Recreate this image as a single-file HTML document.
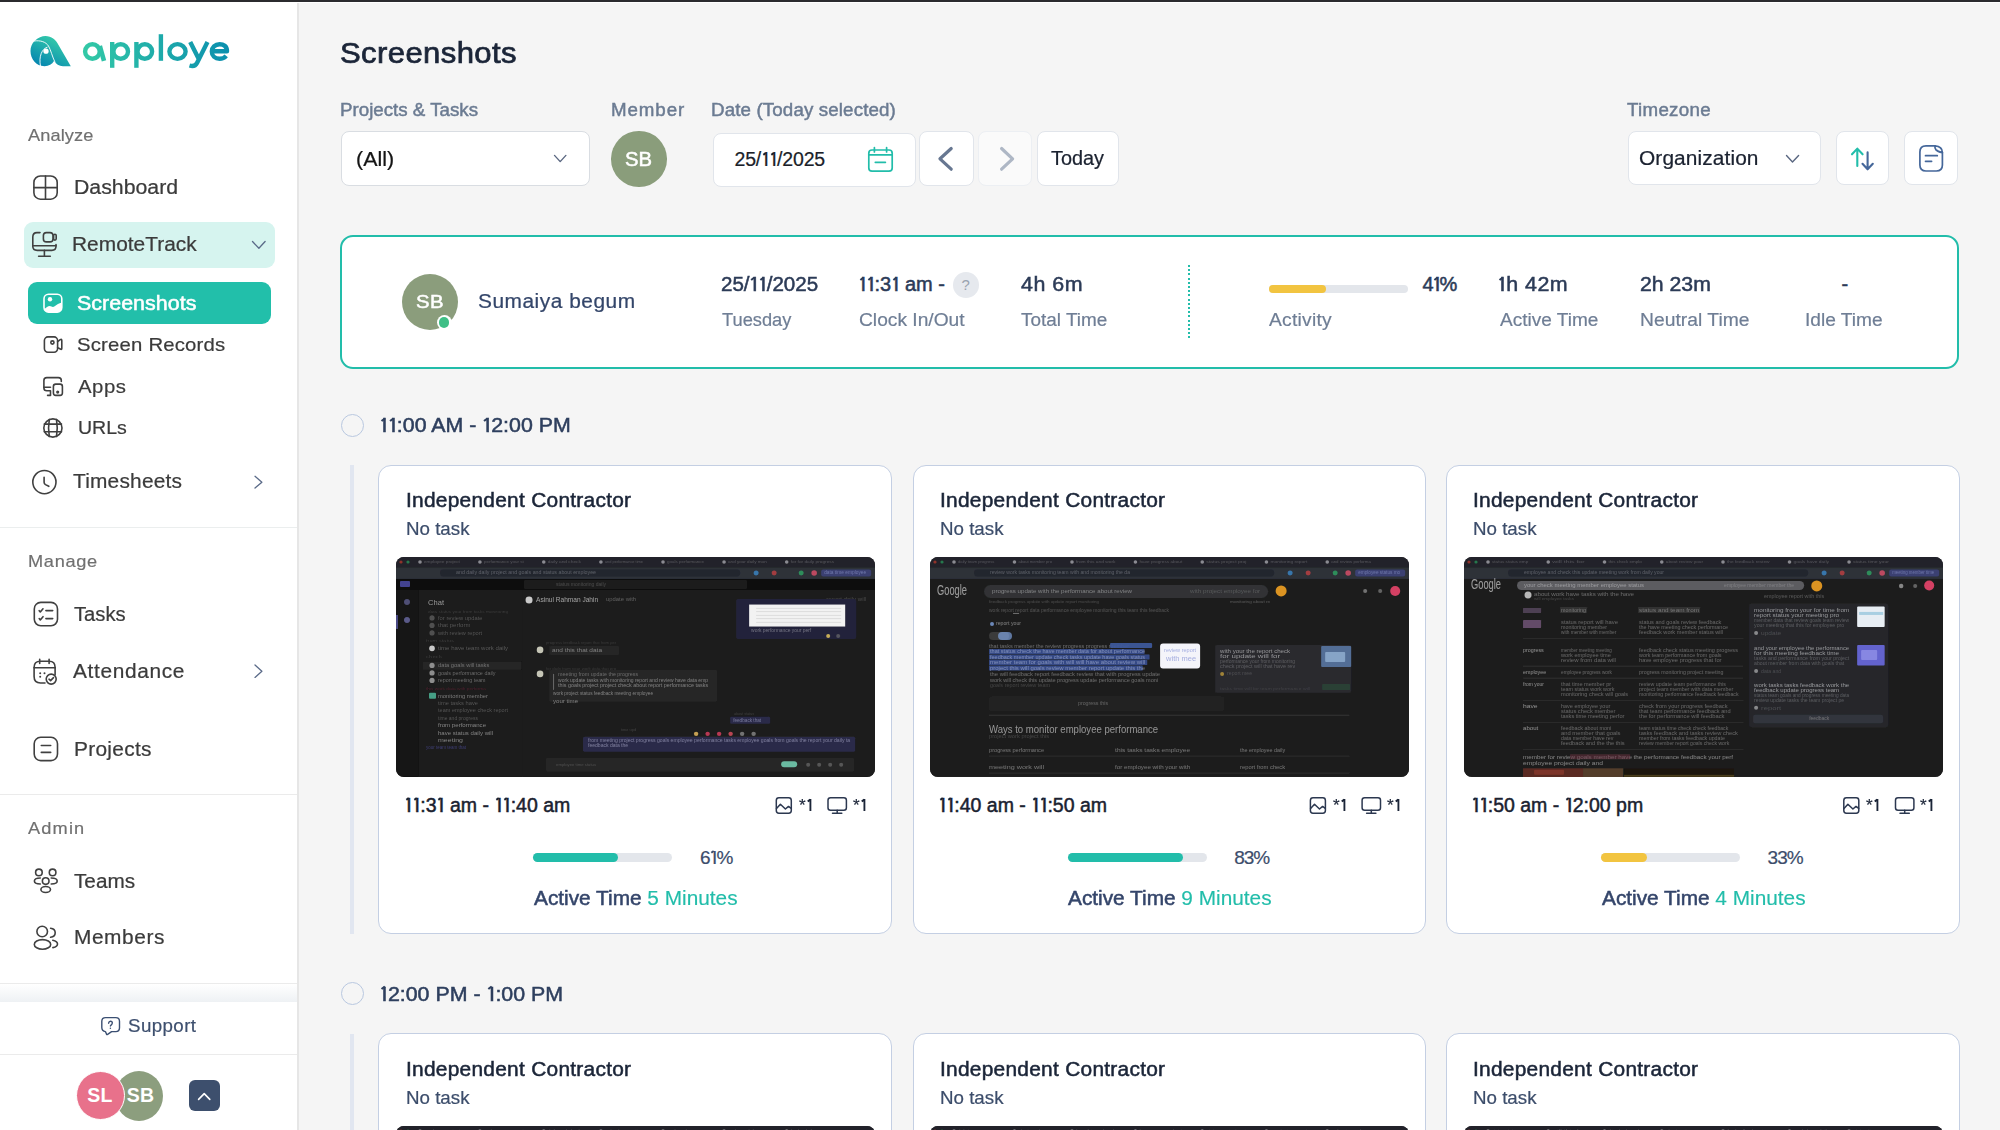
<!DOCTYPE html>
<html><head><meta charset="utf-8"><title>Screenshots</title><style>
*{margin:0;padding:0;box-sizing:border-box}
html,body{width:2000px;height:1130px;overflow:hidden;background:#f5f5f5;font-family:"Liberation Sans",sans-serif}
.a{position:absolute}
.t{position:absolute;white-space:nowrap;line-height:1}
.n1{position:relative;padding-left:0.12em;letter-spacing:calc(var(--ls,0px) + 0.02em)}
.n1::before{content:'';position:absolute;left:0.03em;top:0.175em;width:0.175em;height:0.105em;background:currentColor;transform:rotate(-38deg);transform-origin:100% 0}
.box{position:absolute;background:#fff;border:1px solid #dde2e8;border-radius:8px}
.av{position:absolute;border-radius:50%;color:#fff;font-weight:700;display:flex;align-items:center;justify-content:center;font-family:"Liberation Sans",sans-serif}
</style></head>
<body>
<div class="a" style="left:0;top:0;width:297px;height:1130px;background:#fff"></div>
<div class="a" style="left:297px;top:0;width:2px;height:1130px;background:#e6e6e6"></div>
<div class="a" style="left:0;top:526.5px;width:297px;height:1px;background:#ebeeee"></div>
<div class="a" style="left:0;top:793.8px;width:297px;height:1px;background:#ebebeb"></div>
<div class="a" style="left:0;top:983px;width:297px;height:1px;background:#ebebeb"></div>
<div class="a" style="left:0;top:984px;width:297px;height:18px;background:linear-gradient(#fff,#eef1f4)"></div>
<div class="a" style="left:0;top:1002px;width:297px;height:128px;background:#fff"></div>
<div class="a" style="left:0;top:1053.5px;width:297px;height:1px;background:#ebebeb"></div>
<div class="a" style="left:24px;top:221.5px;width:251px;height:46.5px;background:#d6f4ef;border-radius:9px"></div>
<div class="a" style="left:28px;top:282.2px;width:243px;height:41.5px;background:#22bfaa;border-radius:9px"></div>
<div class="av" style="left:114.5px;top:1070.5px;width:48px;height:50px;background:#8c9e7e;font-size:19.5px;letter-spacing:0.3px;padding-left:4px">SB</div>
<div class="av" style="left:75.5px;top:1071px;width:49px;height:49px;background:#e8718b;font-size:19.5px;border:1px solid #fff;letter-spacing:0.3px">SL</div>
<div class="a" style="left:188.8px;top:1080.4px;width:30.8px;height:30.6px;background:#3d4f6d;border-radius:6px"></div>
<div class="box" style="left:341px;top:131px;width:249px;height:55px;border-color:#d9dde2"></div>
<div class="a" style="left:611.4px;top:131px;width:55.6px;height:55.6px;border-radius:50%;background:#8a9d7b"></div>
<div class="box" style="left:712.5px;top:132.6px;width:203px;height:54.6px;border-color:#e1e5eb"></div>
<div class="box" style="left:919.3px;top:131.3px;width:54.7px;height:54.4px;border-color:#e1e5eb"></div>
<div class="box" style="left:978.4px;top:131.3px;width:53.6px;height:54.4px;border-color:#eceff3;background:#fafafa"></div>
<div class="box" style="left:1036.5px;top:131.3px;width:82.8px;height:54.4px;border-color:#e1e5eb"></div>
<div class="box" style="left:1627.5px;top:131.4px;width:193px;height:54px;border-color:#e1e5eb"></div>
<div class="box" style="left:1835.9px;top:131.4px;width:52.7px;height:54px;border-color:#e1e5eb"></div>
<div class="box" style="left:1904.3px;top:131.4px;width:54px;height:54px;border-color:#e1e5eb"></div>
<div class="a" style="left:340px;top:235px;width:1619px;height:134px;background:#fff;border:2px solid #22bdaa;border-radius:13px"></div>
<div class="a" style="left:402px;top:274px;width:56px;height:56px;border-radius:50%;background:#8b9d7c"></div>
<div class="a" style="left:436.5px;top:315px;width:15px;height:15px;border-radius:50%;background:#fff"></div>
<div class="a" style="left:438.8px;top:317.3px;width:10.4px;height:10.4px;border-radius:50%;background:#3fbf86"></div>
<div class="a" style="left:952.5px;top:272px;width:26.3px;height:26px;border-radius:50%;background:#e6e9ee;color:#9aa3b0;font-size:15px;line-height:26px;text-align:center">?</div>
<div class="a" style="left:1187.8px;top:264.5px;width:2px;height:75px;background:repeating-linear-gradient(#22bdaa 0 2px,transparent 2px 4.2px)"></div>
<div class="a" style="left:1269px;top:285px;width:139px;height:8px;border-radius:4px;background:#e3e6eb"></div>
<div class="a" style="left:1269px;top:285px;width:57px;height:8px;border-radius:4px;background:#f2c440"></div>
<div class="a" style="left:340.7px;top:413.5px;width:23.2px;height:23.2px;border-radius:50%;border:1.5px solid #b9c8e0"></div>
<div class="a" style="left:350px;top:465.2px;width:4.2px;height:469px;background:#e1e6f0"></div>
<div class="a" style="left:378.45px;top:464.55px;width:513.6px;height:469px;background:#fff;border:1.5px solid #c4cfe3;border-radius:13px"></div>
<div class="a" style="left:396.1px;top:557.2px;width:479.2px;height:219.8px;border-radius:8px;overflow:hidden;background:#1c1c1c"><svg width="479.2" height="219.8" viewBox="0 0 479 220" preserveAspectRatio="none" style="display:block"><defs><filter id="bl" x="-5%" y="-20%" width="110%" height="140%"><feGaussianBlur stdDeviation="0.45"/></filter></defs><g filter="url(#bl)"><rect x="0" y="0" width="479" height="10.5" rx="0" fill="#232329" opacity="1"/><circle cx="5" cy="5" r="1.6" fill="#c0392b" opacity="0.7"/><circle cx="12" cy="5" r="1.6" fill="#2ecc71" opacity="0.5"/><circle cx="24" cy="5" r="1.8" fill="#d0d0d8" opacity="0.6"/><text x="28" y="6.25" font-family="Liberation Sans" font-size="4.14" fill="#8a8a95" opacity="0.47" textLength="35.9" lengthAdjust="spacingAndGlyphs">employee project</text><circle cx="83.88599317799795" cy="5" r="1.8" fill="#d0d0d8" opacity="0.6"/><text x="87.88599317799795" y="6.25" font-family="Liberation Sans" font-size="4.14" fill="#8a8a95" opacity="0.47" textLength="39.8" lengthAdjust="spacingAndGlyphs">performance your st</text><circle cx="147.69720685447618" cy="5" r="1.8" fill="#d0d0d8" opacity="0.6"/><text x="151.69720685447618" y="6.25" font-family="Liberation Sans" font-size="4.14" fill="#8a8a95" opacity="0.47" textLength="33.1" lengthAdjust="spacingAndGlyphs">daily and check</text><circle cx="204.82676735775237" cy="5" r="1.8" fill="#d0d0d8" opacity="0.6"/><text x="208.82676735775237" y="6.25" font-family="Liberation Sans" font-size="4.14" fill="#8a8a95" opacity="0.47" textLength="38.1" lengthAdjust="spacingAndGlyphs">and performance time</text><circle cx="266.9159961560254" cy="5" r="1.8" fill="#d0d0d8" opacity="0.6"/><text x="270.9159961560254" y="6.25" font-family="Liberation Sans" font-size="4.14" fill="#8a8a95" opacity="0.47" textLength="37.0" lengthAdjust="spacingAndGlyphs">goals performance</text><circle cx="327.9340619724745" cy="5" r="1.8" fill="#d0d0d8" opacity="0.6"/><text x="331.9340619724745" y="6.25" font-family="Liberation Sans" font-size="4.14" fill="#8a8a95" opacity="0.47" textLength="38.6" lengthAdjust="spacingAndGlyphs">and your daily mon</text><circle cx="390.54662901797116" cy="5" r="1.8" fill="#d0d0d8" opacity="0.6"/><text x="394.54662901797116" y="6.25" font-family="Liberation Sans" font-size="4.14" fill="#8a8a95" opacity="0.47" textLength="43.4" lengthAdjust="spacingAndGlyphs">for for daily progress</text><rect x="0" y="10.5" width="479" height="11.5" rx="0" fill="#2d3039" opacity="1"/><rect x="44" y="12.5" width="300" height="7" rx="3.5" fill="#23262d" opacity="1"/><text x="60" y="17.50" font-family="Liberation Sans" font-size="4.6" fill="#9aa0ac" opacity="0.47" textLength="140.0" lengthAdjust="spacingAndGlyphs">and daily daily project and goals and status about employee</text><circle cx="360" cy="16" r="2.5" fill="#3a88c8" opacity="0.8"/><circle cx="378" cy="16" r="2.5" fill="#d64545" opacity="0.7"/><circle cx="405" cy="16" r="2.5" fill="#2ecc71" opacity="0.6"/><circle cx="418" cy="16" r="2.8" fill="#e0506a" opacity="0.8"/><rect x="425" y="12.5" width="50" height="7" rx="2" fill="#3a3f72" opacity="1"/><text x="428" y="17.50" font-family="Liberation Sans" font-size="4.6" fill="#9aa5d8" opacity="0.55" textLength="42.0" lengthAdjust="spacingAndGlyphs">data time employee</text><rect x="0" y="22" width="479" height="11" rx="0" fill="#0b0b0b" opacity="1"/><rect x="128" y="23" width="223" height="9" rx="1.5" fill="#1f1f1f" opacity="1"/><text x="160" y="29.00" font-family="Liberation Sans" font-size="4.6" fill="#777" opacity="0.47" textLength="50.0" lengthAdjust="spacingAndGlyphs">status monitoring daily</text><rect x="0" y="33" width="22.5" height="187" rx="0" fill="#121212" opacity="1"/><rect x="22.5" y="33" width="104" height="187" rx="0" fill="#1a1a1a" opacity="1"/><rect x="126.5" y="33" width="352.5" height="187" rx="0" fill="#1d1d1d" opacity="1"/><rect x="4" y="24" width="10" height="6" rx="1" fill="#5a5ac8" opacity="0.7"/><circle cx="11" cy="45" r="3" fill="#8b8bd8" opacity="0.5"/><circle cx="11" cy="63" r="3" fill="#8b8bd8" opacity="0.6"/><rect x="0" y="58" width="2" height="14" rx="0" fill="#7070d0" opacity="0.6"/><text x="32" y="47.75" font-family="Liberation Sans" font-size="6.9" fill="#d8d8d8" opacity="0.66" textLength="16.0" lengthAdjust="spacingAndGlyphs">Chat</text><text x="32" y="56.25" font-family="Liberation Sans" font-size="4.14" fill="#777" opacity="0.39" textLength="80.0" lengthAdjust="spacingAndGlyphs">data status your from tasks monitoring</text><circle cx="36" cy="61" r="2.6" fill="#666" opacity="0.7"/><text x="42" y="62.75" font-family="Liberation Sans" font-size="5.06" fill="#999" opacity="0.47" textLength="44.5" lengthAdjust="spacingAndGlyphs">for review update</text><circle cx="36" cy="68.5" r="2.6" fill="#666" opacity="0.7"/><text x="42" y="70.25" font-family="Liberation Sans" font-size="5.06" fill="#999" opacity="0.47" textLength="32.4" lengthAdjust="spacingAndGlyphs">that perform</text><circle cx="36" cy="76" r="2.6" fill="#666" opacity="0.7"/><text x="42" y="77.75" font-family="Liberation Sans" font-size="5.06" fill="#999" opacity="0.47" textLength="44.1" lengthAdjust="spacingAndGlyphs">with review report</text><text x="30" y="85.25" font-family="Liberation Sans" font-size="4.14" fill="#777" opacity="0.39" textLength="28.0" lengthAdjust="spacingAndGlyphs">from status</text><circle cx="36" cy="91.5" r="2.8" fill="#ddd" opacity="0.9"/><text x="42" y="93.25" font-family="Liberation Sans" font-size="5.06" fill="#a0a0a0" opacity="0.47" textLength="70.0" lengthAdjust="spacingAndGlyphs">time have team work daily</text><text x="30" y="101.25" font-family="Liberation Sans" font-size="4.14" fill="#777" opacity="0.39" textLength="16.0" lengthAdjust="spacingAndGlyphs">check</text><rect x="27" y="105" width="98" height="8" rx="0" fill="#262626" opacity="1"/><circle cx="36" cy="108.5" r="2.6" fill="#aaa" opacity="0.8"/><text x="42" y="110.25" font-family="Liberation Sans" font-size="5.06" fill="#b0b0b0" opacity="0.55" textLength="51.3" lengthAdjust="spacingAndGlyphs">data goals will tasks</text><circle cx="36" cy="116" r="2.6" fill="#aaa" opacity="0.8"/><text x="42" y="117.75" font-family="Liberation Sans" font-size="5.06" fill="#b0b0b0" opacity="0.55" textLength="57.5" lengthAdjust="spacingAndGlyphs">goals performance daily</text><circle cx="36" cy="123.5" r="2.6" fill="#aaa" opacity="0.8"/><text x="42" y="125.25" font-family="Liberation Sans" font-size="5.06" fill="#b0b0b0" opacity="0.55" textLength="47.5" lengthAdjust="spacingAndGlyphs">report meeting team</text><text x="30" y="133.25" font-family="Liberation Sans" font-size="4.14" fill="#a03050" opacity="0.39" textLength="60.0" lengthAdjust="spacingAndGlyphs">this work data with performa</text><rect x="33" y="136" width="7" height="6" rx="1" fill="#50c0a0" opacity="0.8"/><text x="42" y="140.75" font-family="Liberation Sans" font-size="5.06" fill="#bbb" opacity="0.62" textLength="50.0" lengthAdjust="spacingAndGlyphs">monitoring member</text><text x="42" y="147.75" font-family="Liberation Sans" font-size="5.06" fill="#888" opacity="0.55" textLength="40.0" lengthAdjust="spacingAndGlyphs">time tasks have</text><text x="42" y="154.75" font-family="Liberation Sans" font-size="5.06" fill="#888" opacity="0.55" textLength="70.0" lengthAdjust="spacingAndGlyphs">team employee check report</text><text x="42" y="162.75" font-family="Liberation Sans" font-size="5.06" fill="#888" opacity="0.55" textLength="40.0" lengthAdjust="spacingAndGlyphs">time and progress</text><text x="42" y="169.75" font-family="Liberation Sans" font-size="5.06" fill="#ddd" opacity="0.55" textLength="48.0" lengthAdjust="spacingAndGlyphs">from performance</text><text x="42" y="177.75" font-family="Liberation Sans" font-size="5.06" fill="#ddd" opacity="0.55" textLength="55.0" lengthAdjust="spacingAndGlyphs">have status daily will</text><text x="42" y="184.75" font-family="Liberation Sans" font-size="5.06" fill="#ddd" opacity="0.55" textLength="25.0" lengthAdjust="spacingAndGlyphs">meeting</text><text x="30" y="192.50" font-family="Liberation Sans" font-size="4.6" fill="#6060c0" opacity="0.55" textLength="40.0" lengthAdjust="spacingAndGlyphs">your team team that</text><circle cx="133" cy="43" r="3.5" fill="#ddd" opacity="0.9"/><text x="140" y="45.25" font-family="Liberation Sans" font-size="6.9" fill="#ddd" opacity="0.70" textLength="62.0" lengthAdjust="spacingAndGlyphs">Asinul Rahman Jahin</text><text x="210" y="44.50" font-family="Liberation Sans" font-size="4.6" fill="#aaa" opacity="0.47" textLength="30.0" lengthAdjust="spacingAndGlyphs">update with</text><text x="430" y="44.50" font-family="Liberation Sans" font-size="4.6" fill="#888" opacity="0.39" textLength="40.0" lengthAdjust="spacingAndGlyphs">report daily will</text><rect x="340" y="42" width="120" height="40" rx="2" fill="#24243a" opacity="1"/><rect x="353" y="47.6" width="96" height="22" rx="0" fill="#f2f2f2" opacity="1"/><rect x="360" y="51.0" width="85" height="0.6" rx="0" fill="#cfcfcf" opacity="1"/><rect x="360" y="54.5" width="85" height="0.6" rx="0" fill="#cfcfcf" opacity="1"/><rect x="360" y="58.0" width="85" height="0.6" rx="0" fill="#cfcfcf" opacity="1"/><rect x="360" y="61.5" width="85" height="0.6" rx="0" fill="#cfcfcf" opacity="1"/><rect x="360" y="65.0" width="85" height="0.6" rx="0" fill="#cfcfcf" opacity="1"/><text x="355" y="75.50" font-family="Liberation Sans" font-size="4.6" fill="#b0b0c0" opacity="0.55" textLength="60.0" lengthAdjust="spacingAndGlyphs">work performance your perf</text><circle cx="432" cy="79" r="2" fill="#f0d060" opacity="0.8"/><circle cx="442" cy="79" r="2" fill="#777" opacity="0.6"/><text x="150" y="87.00" font-family="Liberation Sans" font-size="3.68" fill="#666" opacity="0.39" textLength="70.0" lengthAdjust="spacingAndGlyphs">progress feedback report that from per</text><circle cx="144" cy="93" r="3.3" fill="#d8d8c8" opacity="0.9"/><rect x="153" y="89" width="70" height="9" rx="1.5" fill="#262626" opacity="1"/><text x="156" y="95.25" font-family="Liberation Sans" font-size="5.06" fill="#bbb" opacity="0.62" textLength="50.0" lengthAdjust="spacingAndGlyphs">and this that data</text><text x="150" y="113.00" font-family="Liberation Sans" font-size="3.68" fill="#666" opacity="0.39" textLength="70.0" lengthAdjust="spacingAndGlyphs">for daily from your work data that pro</text><circle cx="144" cy="117" r="3.3" fill="#d8d8c8" opacity="0.9"/><rect x="153" y="113" width="168" height="32" rx="1.5" fill="#252525" opacity="1"/><rect x="157" y="117" width="1" height="16" rx="0" fill="#999" opacity="0.6"/><text x="162" y="119.50" font-family="Liberation Sans" font-size="4.6" fill="#bbb" opacity="0.47" textLength="80.0" lengthAdjust="spacingAndGlyphs">meeting from update the progress</text><text x="162" y="125.50" font-family="Liberation Sans" font-size="4.6" fill="#ccc" opacity="0.55" textLength="150.0" lengthAdjust="spacingAndGlyphs">work update tasks with monitoring report and review have data emp</text><text x="162" y="130.50" font-family="Liberation Sans" font-size="4.6" fill="#ccc" opacity="0.55" textLength="150.0" lengthAdjust="spacingAndGlyphs">this goals project project check about report performance tasks</text><text x="157" y="138.50" font-family="Liberation Sans" font-size="4.6" fill="#ccc" opacity="0.55" textLength="100.0" lengthAdjust="spacingAndGlyphs">work project status feedback meeting employee</text><text x="157" y="146.50" font-family="Liberation Sans" font-size="4.6" fill="#ccc" opacity="0.55" textLength="25.0" lengthAdjust="spacingAndGlyphs">your time</text><text x="338" y="157.88" font-family="Liberation Sans" font-size="3.45" fill="#777" opacity="0.39" textLength="20.0" lengthAdjust="spacingAndGlyphs">about status</text><rect x="334" y="160" width="40" height="7" rx="1.5" fill="#2a2b48" opacity="1"/><text x="337" y="165.00" font-family="Liberation Sans" font-size="4.6" fill="#b8b8e0" opacity="0.55" textLength="28.0" lengthAdjust="spacingAndGlyphs">feedback that</text><text x="225" y="173.88" font-family="Liberation Sans" font-size="3.45" fill="#777" opacity="0.39" textLength="15.0" lengthAdjust="spacingAndGlyphs">time upd</text><circle cx="300.0" cy="177" r="2.2" fill="#f0c060" opacity="0.8"/><circle cx="311.5" cy="177" r="2.2" fill="#e04060" opacity="0.8"/><circle cx="323.0" cy="177" r="2.2" fill="#e04060" opacity="0.8"/><circle cx="334.5" cy="177" r="2.2" fill="#e05060" opacity="0.8"/><circle cx="346.0" cy="177" r="2.2" fill="#888" opacity="0.8"/><circle cx="357.5" cy="177" r="2.2" fill="#888" opacity="0.8"/><rect x="187" y="180" width="272" height="15" rx="1.5" fill="#2c2c4a" opacity="1"/><text x="192" y="185.50" font-family="Liberation Sans" font-size="4.6" fill="#b8b8d8" opacity="0.58" textLength="262.0" lengthAdjust="spacingAndGlyphs">from meeting project progress goals employee performance tasks employee goals from goals the report your daily ta</text><text x="192" y="190.50" font-family="Liberation Sans" font-size="4.6" fill="#b8b8d8" opacity="0.58" textLength="40.0" lengthAdjust="spacingAndGlyphs">feedback data the</text><rect x="150" y="201" width="308" height="14" rx="2" fill="#272727" opacity="1"/><text x="160" y="209.25" font-family="Liberation Sans" font-size="4.14" fill="#777" opacity="0.47" textLength="40.0" lengthAdjust="spacingAndGlyphs">employee time status</text><rect x="385" y="204.5" width="16" height="6" rx="3" fill="#7de0c0" opacity="0.8"/><circle cx="412" cy="208" r="2" fill="#777" opacity="0.6"/><circle cx="423" cy="208" r="2" fill="#777" opacity="0.6"/><circle cx="434" cy="208" r="2" fill="#777" opacity="0.6"/><circle cx="445" cy="208" r="2" fill="#777" opacity="0.6"/></g></svg></div>
<div class="a" style="left:912.55px;top:464.55px;width:513.6px;height:469px;background:#fff;border:1.5px solid #c4cfe3;border-radius:13px"></div>
<div class="a" style="left:930.2px;top:557.2px;width:479.2px;height:219.8px;border-radius:8px;overflow:hidden;background:#1c1c1c"><svg width="479.2" height="219.8" viewBox="0 0 479 220" preserveAspectRatio="none" style="display:block"><defs><filter id="bl" x="-5%" y="-20%" width="110%" height="140%"><feGaussianBlur stdDeviation="0.45"/></filter></defs><g filter="url(#bl)"><rect x="0" y="0" width="479" height="10.5" rx="0" fill="#232329" opacity="1"/><circle cx="5" cy="5" r="1.6" fill="#c0392b" opacity="0.7"/><circle cx="12" cy="5" r="1.6" fill="#2ecc71" opacity="0.5"/><circle cx="24" cy="5" r="1.8" fill="#d0d0d8" opacity="0.6"/><text x="28" y="6.25" font-family="Liberation Sans" font-size="4.14" fill="#8a8a95" opacity="0.47" textLength="36.4" lengthAdjust="spacingAndGlyphs">daily team progress</text><circle cx="84.4310428747367" cy="5" r="1.8" fill="#d0d0d8" opacity="0.6"/><text x="88.4310428747367" y="6.25" font-family="Liberation Sans" font-size="4.14" fill="#8a8a95" opacity="0.47" textLength="33.5" lengthAdjust="spacingAndGlyphs">about member pro</text><circle cx="141.93694102468842" cy="5" r="1.8" fill="#d0d0d8" opacity="0.6"/><text x="145.93694102468842" y="6.25" font-family="Liberation Sans" font-size="4.14" fill="#8a8a95" opacity="0.47" textLength="39.4" lengthAdjust="spacingAndGlyphs">from this and work</text><circle cx="205.34805401759795" cy="5" r="1.8" fill="#d0d0d8" opacity="0.6"/><text x="209.34805401759795" y="6.25" font-family="Liberation Sans" font-size="4.14" fill="#8a8a95" opacity="0.47" textLength="42.8" lengthAdjust="spacingAndGlyphs">have progress about</text><circle cx="272.1424501382934" cy="5" r="1.8" fill="#d0d0d8" opacity="0.6"/><text x="276.1424501382934" y="6.25" font-family="Liberation Sans" font-size="4.14" fill="#8a8a95" opacity="0.47" textLength="40.2" lengthAdjust="spacingAndGlyphs">status project proj</text><circle cx="336.3093513510339" cy="5" r="1.8" fill="#d0d0d8" opacity="0.6"/><text x="340.3093513510339" y="6.25" font-family="Liberation Sans" font-size="4.14" fill="#8a8a95" opacity="0.47" textLength="36.8" lengthAdjust="spacingAndGlyphs">monitoring report</text><circle cx="397.0970973388772" cy="5" r="1.8" fill="#d0d0d8" opacity="0.6"/><text x="401.0970973388772" y="6.25" font-family="Liberation Sans" font-size="4.14" fill="#8a8a95" opacity="0.47" textLength="39.6" lengthAdjust="spacingAndGlyphs">and review performa</text><rect x="0" y="10.5" width="479" height="11.5" rx="0" fill="#2d3039" opacity="1"/><rect x="44" y="12.5" width="300" height="7" rx="3.5" fill="#23262d" opacity="1"/><text x="60" y="17.50" font-family="Liberation Sans" font-size="4.6" fill="#9aa0ac" opacity="0.47" textLength="140.0" lengthAdjust="spacingAndGlyphs">review work tasks monitoring team with and monitoring the da</text><circle cx="360" cy="16" r="2.5" fill="#3a88c8" opacity="0.8"/><circle cx="378" cy="16" r="2.5" fill="#d64545" opacity="0.7"/><circle cx="405" cy="16" r="2.5" fill="#2ecc71" opacity="0.6"/><circle cx="418" cy="16" r="2.8" fill="#e0506a" opacity="0.8"/><rect x="425" y="12.5" width="50" height="7" rx="2" fill="#3a3f72" opacity="1"/><text x="428" y="17.50" font-family="Liberation Sans" font-size="4.6" fill="#9aa5d8" opacity="0.55" textLength="42.0" lengthAdjust="spacingAndGlyphs">employee status mo</text><rect x="0" y="22" width="479" height="198" rx="0" fill="#1f1f1f" opacity="1"/><text x="7" y="38.50" font-family="Liberation Sans" font-size="13.8" fill="#e8e8e8" opacity="0.62" textLength="30.0" lengthAdjust="spacingAndGlyphs">Google</text><rect x="54" y="28" width="284" height="13" rx="6.5" fill="#303134" opacity="1"/><text x="62" y="36.00" font-family="Liberation Sans" font-size="5.52" fill="#c8c8c8" opacity="0.55" textLength="140.0" lengthAdjust="spacingAndGlyphs">progress update with the performance about review</text><text x="260" y="36.00" font-family="Liberation Sans" font-size="5.52" fill="#999" opacity="0.39" textLength="70.0" lengthAdjust="spacingAndGlyphs">with project employee for</text><circle cx="351" cy="34" r="5.5" fill="#f0a020" opacity="0.9"/><circle cx="435" cy="34" r="2" fill="#aaa" opacity="0.6"/><circle cx="450" cy="34" r="2" fill="#aaa" opacity="0.5"/><circle cx="465" cy="34" r="5" fill="#e8456a" opacity="0.9"/><text x="59" y="45.75" font-family="Liberation Sans" font-size="4.14" fill="#888" opacity="0.39" textLength="110.0" lengthAdjust="spacingAndGlyphs">feedback progress update with update report monitoring</text><text x="300" y="45.75" font-family="Liberation Sans" font-size="4.14" fill="#aaa" opacity="0.39" textLength="40.0" lengthAdjust="spacingAndGlyphs">monitoring about re</text><text x="59" y="55.50" font-family="Liberation Sans" font-size="4.6" fill="#888" opacity="0.47" textLength="180.0" lengthAdjust="spacingAndGlyphs">work report report data performance employee monitoring this team this feedback</text><rect x="83" y="56" width="6" height="0.8" rx="0" fill="#ccc" opacity="0.6"/><circle cx="62" cy="67" r="2" fill="#8ab4f8" opacity="0.7"/><text x="66" y="68.50" font-family="Liberation Sans" font-size="4.6" fill="#ccc" opacity="0.55" textLength="25.0" lengthAdjust="spacingAndGlyphs">report your</text><text x="410" y="68.50" font-family="Liberation Sans" font-size="4.6" fill="#777" opacity="0.39" textLength="5.0" lengthAdjust="spacingAndGlyphs"></text><rect x="59" y="75" width="20" height="8" rx="4" fill="#3a3a3a" opacity="1"/><rect x="68" y="75" width="14" height="8" rx="4" fill="#8ab4f8" opacity="0.6"/><text x="59" y="90.75" font-family="Liberation Sans" font-size="5.06" fill="#aaa" opacity="0.55" textLength="140.0" lengthAdjust="spacingAndGlyphs">that tasks member the review progress progress member</text><rect x="180" y="86" width="42" height="5" rx="1" fill="#3d5aa0" opacity="0.9"/><rect x="59" y="92.0" width="155.42628688513517" height="5" rx="0.5" fill="#3b5298" opacity="0.85"/><text x="60" y="96.25" font-family="Liberation Sans" font-size="5.06" fill="#dfe6ff" opacity="0.43" textLength="155.0" lengthAdjust="spacingAndGlyphs">that status check the have member data for about performance</text><rect x="59" y="97.5" width="160.44295178861702" height="5" rx="0.5" fill="#3b5298" opacity="0.85"/><text x="60" y="101.75" font-family="Liberation Sans" font-size="5.06" fill="#dfe6ff" opacity="0.43" textLength="155.0" lengthAdjust="spacingAndGlyphs">feedback member update check tasks update have goals status</text><rect x="59" y="103.0" width="158.12350684170292" height="5" rx="0.5" fill="#3b5298" opacity="0.85"/><text x="60" y="107.25" font-family="Liberation Sans" font-size="5.06" fill="#dfe6ff" opacity="0.43" textLength="155.0" lengthAdjust="spacingAndGlyphs">member team for goals with will will have about review will</text><rect x="59" y="108.5" width="153.5908151214942" height="5" rx="0.5" fill="#3b5298" opacity="0.85"/><text x="60" y="112.75" font-family="Liberation Sans" font-size="5.06" fill="#dfe6ff" opacity="0.43" textLength="155.0" lengthAdjust="spacingAndGlyphs">project this will goals review member report update this the</text><text x="60" y="118.75" font-family="Liberation Sans" font-size="5.06" fill="#aaa" opacity="0.55" textLength="170.0" lengthAdjust="spacingAndGlyphs">the will feedback report feedback review that with progress update</text><text x="60" y="124.75" font-family="Liberation Sans" font-size="5.06" fill="#aaa" opacity="0.55" textLength="168.0" lengthAdjust="spacingAndGlyphs">work will check this update progress update performance goals moni</text><text x="60" y="130.50" font-family="Liberation Sans" font-size="4.6" fill="#777" opacity="0.39" textLength="60.0" lengthAdjust="spacingAndGlyphs">goals report review team</text><rect x="230" y="86.5" width="40" height="25" rx="3" fill="#f4f4fa" opacity="1"/><text x="234" y="95.12" font-family="Liberation Sans" font-size="5.75" fill="#7080d0" opacity="0.62" textLength="32.0" lengthAdjust="spacingAndGlyphs">review report</text><text x="236" y="103.75" font-family="Liberation Sans" font-size="6.9" fill="#6070c8" opacity="0.55" textLength="30.0" lengthAdjust="spacingAndGlyphs">with mee</text><rect x="285" y="88" width="136" height="48" rx="2" fill="#29292e" opacity="1"/><text x="290" y="96.00" font-family="Liberation Sans" font-size="5.52" fill="#d8d8d8" opacity="0.62" textLength="70.0" lengthAdjust="spacingAndGlyphs">with your the report check</text><text x="290" y="101.00" font-family="Liberation Sans" font-size="5.52" fill="#d8d8d8" opacity="0.62" textLength="60.0" lengthAdjust="spacingAndGlyphs">for update will for</text><text x="290" y="106.50" font-family="Liberation Sans" font-size="4.6" fill="#999" opacity="0.47" textLength="75.0" lengthAdjust="spacingAndGlyphs">performance your from monitoring</text><text x="290" y="111.50" font-family="Liberation Sans" font-size="4.6" fill="#999" opacity="0.47" textLength="75.0" lengthAdjust="spacingAndGlyphs">check project will that have rev</text><circle cx="292" cy="117" r="2" fill="#f0c040" opacity="0.6"/><text x="297" y="118.50" font-family="Liberation Sans" font-size="4.6" fill="#888" opacity="0.39" textLength="25.0" lengthAdjust="spacingAndGlyphs">report mee</text><rect x="391" y="89" width="30" height="21" rx="1" fill="#5a7aa8" opacity="0.85"/><rect x="395" y="95" width="20" height="10" rx="1" fill="#a8c8e8" opacity="0.6"/><text x="290" y="133.25" font-family="Liberation Sans" font-size="4.14" fill="#666" opacity="0.39" textLength="90.0" lengthAdjust="spacingAndGlyphs">tasks time will for team performance will</text><rect x="392" y="127" width="28" height="6" rx="1" fill="#2a4a3a" opacity="0.7"/><rect x="59" y="140" width="235" height="14" rx="3" fill="#242424" opacity="1"/><text x="148" y="148.50" font-family="Liberation Sans" font-size="4.6" fill="#aaa" opacity="0.47" textLength="30.0" lengthAdjust="spacingAndGlyphs">progress this</text><rect x="59" y="158" width="360" height="0.6" rx="0" fill="#444" opacity="1"/><text x="59" y="175.75" font-family="Liberation Sans" font-size="10.58" fill="#dcdcdc" opacity="0.62" textLength="169.0" lengthAdjust="spacingAndGlyphs">Ways to monitor employee performance</text><text x="59" y="181.50" font-family="Liberation Sans" font-size="4.6" fill="#777" opacity="0.39" textLength="60.0" lengthAdjust="spacingAndGlyphs">project work project this</text><text x="59" y="195.00" font-family="Liberation Sans" font-size="5.52" fill="#bbb" opacity="0.55" textLength="55.0" lengthAdjust="spacingAndGlyphs">progress performance</text><text x="179" y="193.88" font-family="Liberation Sans" font-size="3.45" fill="#888" opacity="0.39" textLength="3.0" lengthAdjust="spacingAndGlyphs"></text><text x="185" y="195.00" font-family="Liberation Sans" font-size="5.52" fill="#bbb" opacity="0.55" textLength="75.0" lengthAdjust="spacingAndGlyphs">this tasks tasks employee</text><text x="305" y="193.88" font-family="Liberation Sans" font-size="3.45" fill="#888" opacity="0.39" textLength="3.0" lengthAdjust="spacingAndGlyphs"></text><text x="310" y="195.00" font-family="Liberation Sans" font-size="5.52" fill="#bbb" opacity="0.55" textLength="45.0" lengthAdjust="spacingAndGlyphs">the employee daily</text><text x="420" y="193.88" font-family="Liberation Sans" font-size="3.45" fill="#888" opacity="0.39" textLength="3.0" lengthAdjust="spacingAndGlyphs"></text><rect x="59" y="199" width="360" height="0.5" rx="0" fill="#3a3a3a" opacity="1"/><text x="59" y="212.00" font-family="Liberation Sans" font-size="5.52" fill="#bbb" opacity="0.55" textLength="55.0" lengthAdjust="spacingAndGlyphs">meeting work will</text><text x="179" y="210.88" font-family="Liberation Sans" font-size="3.45" fill="#888" opacity="0.39" textLength="3.0" lengthAdjust="spacingAndGlyphs"></text><text x="185" y="212.00" font-family="Liberation Sans" font-size="5.52" fill="#bbb" opacity="0.55" textLength="75.0" lengthAdjust="spacingAndGlyphs">for employee with your with</text><text x="305" y="210.88" font-family="Liberation Sans" font-size="3.45" fill="#888" opacity="0.39" textLength="3.0" lengthAdjust="spacingAndGlyphs"></text><text x="310" y="212.00" font-family="Liberation Sans" font-size="5.52" fill="#bbb" opacity="0.55" textLength="45.0" lengthAdjust="spacingAndGlyphs">report from check</text><text x="420" y="210.88" font-family="Liberation Sans" font-size="3.45" fill="#888" opacity="0.39" textLength="3.0" lengthAdjust="spacingAndGlyphs"></text><rect x="59" y="216" width="360" height="0.5" rx="0" fill="#3a3a3a" opacity="1"/></g></svg></div>
<div class="a" style="left:1445.95px;top:464.55px;width:513.6px;height:469px;background:#fff;border:1.5px solid #c4cfe3;border-radius:13px"></div>
<div class="a" style="left:1463.6px;top:557.2px;width:479.2px;height:219.8px;border-radius:8px;overflow:hidden;background:#1c1c1c"><svg width="479.2" height="219.8" viewBox="0 0 479 220" preserveAspectRatio="none" style="display:block"><defs><filter id="bl" x="-5%" y="-20%" width="110%" height="140%"><feGaussianBlur stdDeviation="0.45"/></filter></defs><g filter="url(#bl)"><rect x="0" y="0" width="479" height="10.5" rx="0" fill="#232329" opacity="1"/><circle cx="5" cy="5" r="1.6" fill="#c0392b" opacity="0.7"/><circle cx="12" cy="5" r="1.6" fill="#2ecc71" opacity="0.5"/><circle cx="24" cy="5" r="1.8" fill="#d0d0d8" opacity="0.6"/><text x="28" y="6.25" font-family="Liberation Sans" font-size="4.14" fill="#8a8a95" opacity="0.47" textLength="36.2" lengthAdjust="spacingAndGlyphs">status status emp</text><circle cx="84.20489014589003" cy="5" r="1.8" fill="#d0d0d8" opacity="0.6"/><text x="88.20489014589003" y="6.25" font-family="Liberation Sans" font-size="4.14" fill="#8a8a95" opacity="0.47" textLength="32.3" lengthAdjust="spacingAndGlyphs">will this for</text><circle cx="140.46165023775296" cy="5" r="1.8" fill="#d0d0d8" opacity="0.6"/><text x="144.46165023775296" y="6.25" font-family="Liberation Sans" font-size="4.14" fill="#8a8a95" opacity="0.47" textLength="33.2" lengthAdjust="spacingAndGlyphs">this check emplo</text><circle cx="197.69491488010314" cy="5" r="1.8" fill="#d0d0d8" opacity="0.6"/><text x="201.69491488010314" y="6.25" font-family="Liberation Sans" font-size="4.14" fill="#8a8a95" opacity="0.47" textLength="37.2" lengthAdjust="spacingAndGlyphs">about review your</text><circle cx="258.900628121193" cy="5" r="1.8" fill="#d0d0d8" opacity="0.6"/><text x="262.900628121193" y="6.25" font-family="Liberation Sans" font-size="4.14" fill="#8a8a95" opacity="0.47" textLength="42.5" lengthAdjust="spacingAndGlyphs">the feedback review</text><circle cx="325.38751034983943" cy="5" r="1.8" fill="#d0d0d8" opacity="0.6"/><text x="329.38751034983943" y="6.25" font-family="Liberation Sans" font-size="4.14" fill="#8a8a95" opacity="0.47" textLength="35.5" lengthAdjust="spacingAndGlyphs">goals have daily</text><circle cx="384.9031101818821" cy="5" r="1.8" fill="#d0d0d8" opacity="0.6"/><text x="388.9031101818821" y="6.25" font-family="Liberation Sans" font-size="4.14" fill="#8a8a95" opacity="0.47" textLength="35.9" lengthAdjust="spacingAndGlyphs">status time your</text><rect x="0" y="10.5" width="479" height="11.5" rx="0" fill="#2d3039" opacity="1"/><rect x="44" y="12.5" width="300" height="7" rx="3.5" fill="#23262d" opacity="1"/><text x="60" y="17.50" font-family="Liberation Sans" font-size="4.6" fill="#9aa0ac" opacity="0.47" textLength="140.0" lengthAdjust="spacingAndGlyphs">employee and check this update meeting work from daily your</text><circle cx="360" cy="16" r="2.5" fill="#3a88c8" opacity="0.8"/><circle cx="378" cy="16" r="2.5" fill="#d64545" opacity="0.7"/><circle cx="405" cy="16" r="2.5" fill="#2ecc71" opacity="0.6"/><circle cx="418" cy="16" r="2.8" fill="#e0506a" opacity="0.8"/><rect x="425" y="12.5" width="50" height="7" rx="2" fill="#3a3f72" opacity="1"/><text x="428" y="17.50" font-family="Liberation Sans" font-size="4.6" fill="#9aa5d8" opacity="0.55" textLength="42.0" lengthAdjust="spacingAndGlyphs">meeting member time</text><rect x="0" y="22" width="479" height="198" rx="0" fill="#1f1f1f" opacity="1"/><text x="7" y="32.50" font-family="Liberation Sans" font-size="13.8" fill="#e8e8e8" opacity="0.62" textLength="30.0" lengthAdjust="spacingAndGlyphs">Google</text><rect x="53" y="24" width="287" height="9" rx="4.5" fill="#5b5b60" opacity="1"/><text x="60" y="30.50" font-family="Liberation Sans" font-size="5.52" fill="#e0e0e0" opacity="0.47" textLength="120.0" lengthAdjust="spacingAndGlyphs">your check meeting member employee status</text><text x="260" y="30.50" font-family="Liberation Sans" font-size="5.52" fill="#bbb" opacity="0.39" textLength="70.0" lengthAdjust="spacingAndGlyphs">employee member member the</text><circle cx="352.6" cy="29" r="5.5" fill="#f0a020" opacity="0.9"/><circle cx="437" cy="29" r="2.2" fill="#ccc" opacity="0.6"/><circle cx="451" cy="29" r="2" fill="#aaa" opacity="0.5"/><circle cx="465" cy="28.5" r="5" fill="#e8456a" opacity="0.9"/><circle cx="64" cy="38" r="3.5" fill="#ddd" opacity="0.8"/><text x="70" y="39.12" font-family="Liberation Sans" font-size="5.75" fill="#bbb" opacity="0.47" textLength="100.0" lengthAdjust="spacingAndGlyphs">about work have tasks with the have</text><text x="70" y="43.25" font-family="Liberation Sans" font-size="4.14" fill="#777" opacity="0.39" textLength="40.0" lengthAdjust="spacingAndGlyphs">will employee tasks</text><text x="300" y="41.50" font-family="Liberation Sans" font-size="4.6" fill="#aaa" opacity="0.39" textLength="60.0" lengthAdjust="spacingAndGlyphs">employee report with this</text><rect x="59" y="51" width="18" height="5" rx="0.5" fill="#5a4a60" opacity="0.8"/><text x="97" y="55.25" font-family="Liberation Sans" font-size="5.98" fill="#ddd" opacity="0.62" textLength="25.0" lengthAdjust="spacingAndGlyphs">monitoring</text><rect x="96" y="50" width="27" height="6" rx="0.5" fill="#4a4a4a" opacity="0.4"/><text x="175" y="55.25" font-family="Liberation Sans" font-size="5.98" fill="#ddd" opacity="0.62" textLength="60.0" lengthAdjust="spacingAndGlyphs">status and team from</text><rect x="174" y="50" width="62" height="6" rx="0.5" fill="#4a4a4a" opacity="0.4"/><rect x="59" y="63.0" width="18" height="8" rx="0.5" fill="#6a5070" opacity="0.9"/><text x="97" y="67.25" font-family="Liberation Sans" font-size="5.06" fill="#aaa" opacity="0.51" textLength="56.9" lengthAdjust="spacingAndGlyphs">status report will have</text><text x="175" y="67.25" font-family="Liberation Sans" font-size="5.06" fill="#aaa" opacity="0.51" textLength="82.1" lengthAdjust="spacingAndGlyphs">status and goals review feedback</text><text x="97" y="72.25" font-family="Liberation Sans" font-size="5.06" fill="#aaa" opacity="0.51" textLength="46.0" lengthAdjust="spacingAndGlyphs">monitoring member</text><text x="175" y="72.25" font-family="Liberation Sans" font-size="5.06" fill="#aaa" opacity="0.51" textLength="89.0" lengthAdjust="spacingAndGlyphs">the have meeting check performance</text><text x="97" y="77.25" font-family="Liberation Sans" font-size="5.06" fill="#aaa" opacity="0.51" textLength="55.2" lengthAdjust="spacingAndGlyphs">with member with member</text><text x="175" y="77.25" font-family="Liberation Sans" font-size="5.06" fill="#aaa" opacity="0.51" textLength="84.0" lengthAdjust="spacingAndGlyphs">feedback work member status will</text><rect x="59" y="81.5" width="220" height="0.5" rx="0" fill="#3a3a3a" opacity="1"/><text x="59" y="95.00" font-family="Liberation Sans" font-size="5.52" fill="#ddd" opacity="0.58" textLength="20.7" lengthAdjust="spacingAndGlyphs">progress</text><text x="97" y="94.75" font-family="Liberation Sans" font-size="5.06" fill="#aaa" opacity="0.51" textLength="50.7" lengthAdjust="spacingAndGlyphs">member meeting meeting</text><text x="175" y="94.75" font-family="Liberation Sans" font-size="5.06" fill="#aaa" opacity="0.51" textLength="98.8" lengthAdjust="spacingAndGlyphs">feedback check status meeting progress</text><text x="97" y="99.75" font-family="Liberation Sans" font-size="5.06" fill="#aaa" opacity="0.51" textLength="49.7" lengthAdjust="spacingAndGlyphs">work employee time</text><text x="175" y="99.75" font-family="Liberation Sans" font-size="5.06" fill="#aaa" opacity="0.51" textLength="82.4" lengthAdjust="spacingAndGlyphs">work team performance from goals</text><text x="97" y="104.75" font-family="Liberation Sans" font-size="5.06" fill="#aaa" opacity="0.51" textLength="54.9" lengthAdjust="spacingAndGlyphs">review from data will</text><text x="175" y="104.75" font-family="Liberation Sans" font-size="5.06" fill="#aaa" opacity="0.51" textLength="82.4" lengthAdjust="spacingAndGlyphs">have employee progress that for</text><rect x="59" y="109" width="220" height="0.5" rx="0" fill="#3a3a3a" opacity="1"/><text x="59" y="117.00" font-family="Liberation Sans" font-size="5.52" fill="#ddd" opacity="0.58" textLength="23.2" lengthAdjust="spacingAndGlyphs">employee</text><text x="97" y="116.75" font-family="Liberation Sans" font-size="5.06" fill="#aaa" opacity="0.51" textLength="50.8" lengthAdjust="spacingAndGlyphs">employee progress work</text><text x="175" y="116.75" font-family="Liberation Sans" font-size="5.06" fill="#aaa" opacity="0.51" textLength="84.4" lengthAdjust="spacingAndGlyphs">progress monitoring project meeting</text><rect x="59" y="121" width="220" height="0.5" rx="0" fill="#3a3a3a" opacity="1"/><text x="59" y="129.50" font-family="Liberation Sans" font-size="5.52" fill="#ddd" opacity="0.58" textLength="20.8" lengthAdjust="spacingAndGlyphs">from your</text><text x="97" y="129.25" font-family="Liberation Sans" font-size="5.06" fill="#aaa" opacity="0.51" textLength="50.1" lengthAdjust="spacingAndGlyphs">that time member pr</text><text x="175" y="129.25" font-family="Liberation Sans" font-size="5.06" fill="#aaa" opacity="0.51" textLength="86.8" lengthAdjust="spacingAndGlyphs">review update team performance this</text><text x="97" y="134.25" font-family="Liberation Sans" font-size="5.06" fill="#aaa" opacity="0.51" textLength="53.4" lengthAdjust="spacingAndGlyphs">team status work work</text><text x="175" y="134.25" font-family="Liberation Sans" font-size="5.06" fill="#aaa" opacity="0.51" textLength="94.1" lengthAdjust="spacingAndGlyphs">project team member with data member</text><text x="97" y="139.25" font-family="Liberation Sans" font-size="5.06" fill="#aaa" opacity="0.51" textLength="67.1" lengthAdjust="spacingAndGlyphs">monitoring check will goals</text><text x="175" y="139.25" font-family="Liberation Sans" font-size="5.06" fill="#aaa" opacity="0.51" textLength="99.4" lengthAdjust="spacingAndGlyphs">monitoring performance feedback feedback</text><rect x="59" y="143.5" width="220" height="0.5" rx="0" fill="#3a3a3a" opacity="1"/><text x="59" y="151.50" font-family="Liberation Sans" font-size="5.52" fill="#ddd" opacity="0.58" textLength="14.6" lengthAdjust="spacingAndGlyphs">have</text><text x="97" y="151.25" font-family="Liberation Sans" font-size="5.06" fill="#aaa" opacity="0.51" textLength="49.2" lengthAdjust="spacingAndGlyphs">have employee your</text><text x="175" y="151.25" font-family="Liberation Sans" font-size="5.06" fill="#aaa" opacity="0.51" textLength="88.4" lengthAdjust="spacingAndGlyphs">check from your progress feedback</text><text x="97" y="156.25" font-family="Liberation Sans" font-size="5.06" fill="#aaa" opacity="0.51" textLength="54.3" lengthAdjust="spacingAndGlyphs">status check member</text><text x="175" y="156.25" font-family="Liberation Sans" font-size="5.06" fill="#aaa" opacity="0.51" textLength="91.4" lengthAdjust="spacingAndGlyphs">that team performance feedback and</text><text x="97" y="161.25" font-family="Liberation Sans" font-size="5.06" fill="#aaa" opacity="0.51" textLength="63.4" lengthAdjust="spacingAndGlyphs">tasks time meeting perfor</text><text x="175" y="161.25" font-family="Liberation Sans" font-size="5.06" fill="#aaa" opacity="0.51" textLength="85.4" lengthAdjust="spacingAndGlyphs">the for performance will feedback</text><rect x="59" y="165.5" width="220" height="0.5" rx="0" fill="#3a3a3a" opacity="1"/><text x="59" y="173.50" font-family="Liberation Sans" font-size="5.52" fill="#ddd" opacity="0.58" textLength="15.2" lengthAdjust="spacingAndGlyphs">about</text><text x="97" y="173.25" font-family="Liberation Sans" font-size="5.06" fill="#aaa" opacity="0.51" textLength="50.1" lengthAdjust="spacingAndGlyphs">feedback about moni</text><text x="175" y="173.25" font-family="Liberation Sans" font-size="5.06" fill="#aaa" opacity="0.51" textLength="89.1" lengthAdjust="spacingAndGlyphs">team status time check check feedback</text><text x="97" y="178.25" font-family="Liberation Sans" font-size="5.06" fill="#aaa" opacity="0.51" textLength="59.3" lengthAdjust="spacingAndGlyphs">and member that goals</text><text x="175" y="178.25" font-family="Liberation Sans" font-size="5.06" fill="#aaa" opacity="0.51" textLength="98.8" lengthAdjust="spacingAndGlyphs">tasks feedback and tasks review check</text><text x="97" y="183.25" font-family="Liberation Sans" font-size="5.06" fill="#aaa" opacity="0.51" textLength="52.2" lengthAdjust="spacingAndGlyphs">data member have rev</text><text x="175" y="183.25" font-family="Liberation Sans" font-size="5.06" fill="#aaa" opacity="0.51" textLength="85.8" lengthAdjust="spacingAndGlyphs">member from tasks feedback update</text><text x="97" y="188.25" font-family="Liberation Sans" font-size="5.06" fill="#aaa" opacity="0.51" textLength="63.5" lengthAdjust="spacingAndGlyphs">feedback and the the this</text><text x="175" y="188.25" font-family="Liberation Sans" font-size="5.06" fill="#aaa" opacity="0.51" textLength="90.1" lengthAdjust="spacingAndGlyphs">review member report goals check work</text><rect x="59" y="192.5" width="220" height="0.5" rx="0" fill="#3a3a3a" opacity="1"/><rect x="285" y="46.5" width="139" height="124" rx="3" fill="#25262b" opacity="1"/><text x="290" y="55.00" font-family="Liberation Sans" font-size="5.52" fill="#dcdcdc" opacity="0.62" textLength="95.0" lengthAdjust="spacingAndGlyphs">monitoring from your for time from</text><text x="290" y="60.00" font-family="Liberation Sans" font-size="5.52" fill="#dcdcdc" opacity="0.62" textLength="85.0" lengthAdjust="spacingAndGlyphs">report status your meeting pro</text><text x="290" y="65.50" font-family="Liberation Sans" font-size="4.6" fill="#999" opacity="0.47" textLength="95.0" lengthAdjust="spacingAndGlyphs">member data that review goals team review</text><text x="290" y="70.50" font-family="Liberation Sans" font-size="4.6" fill="#999" opacity="0.47" textLength="90.0" lengthAdjust="spacingAndGlyphs">your meeting that this for employee pro</text><circle cx="292" cy="76" r="2" fill="#ccc" opacity="0.6"/><text x="297" y="78.00" font-family="Liberation Sans" font-size="4.6" fill="#888" opacity="0.39" textLength="20.0" lengthAdjust="spacingAndGlyphs">update</text><text x="290" y="93.00" font-family="Liberation Sans" font-size="5.52" fill="#dcdcdc" opacity="0.62" textLength="95.0" lengthAdjust="spacingAndGlyphs">and your employee the performance</text><text x="290" y="98.00" font-family="Liberation Sans" font-size="5.52" fill="#dcdcdc" opacity="0.62" textLength="85.0" lengthAdjust="spacingAndGlyphs">for this meeting feedback time</text><text x="290" y="103.50" font-family="Liberation Sans" font-size="4.6" fill="#999" opacity="0.47" textLength="95.0" lengthAdjust="spacingAndGlyphs">tasks and performance from your project</text><text x="290" y="108.50" font-family="Liberation Sans" font-size="4.6" fill="#999" opacity="0.47" textLength="90.0" lengthAdjust="spacingAndGlyphs">about member from data with goals that</text><circle cx="292" cy="114" r="2" fill="#ccc" opacity="0.6"/><text x="297" y="116.00" font-family="Liberation Sans" font-size="4.6" fill="#888" opacity="0.39" textLength="20.0" lengthAdjust="spacingAndGlyphs">data and</text><text x="290" y="130.00" font-family="Liberation Sans" font-size="5.52" fill="#dcdcdc" opacity="0.62" textLength="95.0" lengthAdjust="spacingAndGlyphs">work tasks tasks feedback work the</text><text x="290" y="135.00" font-family="Liberation Sans" font-size="5.52" fill="#dcdcdc" opacity="0.62" textLength="85.0" lengthAdjust="spacingAndGlyphs">feedback update progress team</text><text x="290" y="140.50" font-family="Liberation Sans" font-size="4.6" fill="#999" opacity="0.47" textLength="95.0" lengthAdjust="spacingAndGlyphs">status team goals and progress meeting data</text><text x="290" y="145.50" font-family="Liberation Sans" font-size="4.6" fill="#999" opacity="0.47" textLength="90.0" lengthAdjust="spacingAndGlyphs">review update tasks the team project pe</text><circle cx="292" cy="151" r="2" fill="#ccc" opacity="0.6"/><text x="297" y="153.00" font-family="Liberation Sans" font-size="4.6" fill="#888" opacity="0.39" textLength="20.0" lengthAdjust="spacingAndGlyphs">report</text><rect x="393" y="49.5" width="27.5" height="20.5" rx="1" fill="#e8eef4" opacity="1"/><rect x="395" y="55" width="24" height="3" rx="0" fill="#6ab0d0" opacity="0.5"/><rect x="393" y="88" width="27.5" height="20.5" rx="1" fill="#6a6ae0" opacity="0.9"/><rect x="397" y="93" width="16" height="10" rx="1" fill="#a0a0f0" opacity="0.6"/><rect x="289" y="158" width="130" height="8.5" rx="2" fill="#32343c" opacity="1"/><text x="345" y="163.50" font-family="Liberation Sans" font-size="4.6" fill="#bbb" opacity="0.47" textLength="20.0" lengthAdjust="spacingAndGlyphs">feedback</text><text x="59" y="202.25" font-family="Liberation Sans" font-size="5.98" fill="#ccc" opacity="0.58" textLength="210.0" lengthAdjust="spacingAndGlyphs">member for review goals member have the performance feedback your perf</text><rect x="106" y="197.5" width="60" height="5" rx="0.5" fill="#6a3040" opacity="0.5"/><text x="59" y="208.25" font-family="Liberation Sans" font-size="5.98" fill="#ccc" opacity="0.58" textLength="80.0" lengthAdjust="spacingAndGlyphs">employee project daily and</text><rect x="59" y="211.5" width="60" height="9" rx="0" fill="#5a2a22" opacity="1"/><rect x="70" y="213" width="30" height="5" rx="1" fill="#a04030" opacity="0.5"/><rect x="119" y="211.5" width="40" height="9" rx="0" fill="#6a4a30" opacity="0.7"/><rect x="160" y="211.5" width="110" height="9" rx="0" fill="#1a1610" opacity="1"/><rect x="160" y="218" width="110" height="2" rx="0" fill="#605020" opacity="0.7"/></g></svg></div>
<div class="a" style="left:340.7px;top:981.8px;width:23.2px;height:23.2px;border-radius:50%;border:1.5px solid #b9c8e0"></div>
<div class="a" style="left:350px;top:1033.5px;width:4.2px;height:469px;background:#e1e6f0"></div>
<div class="a" style="left:378.45px;top:1032.85px;width:513.6px;height:469px;background:#fff;border:1.5px solid #c4cfe3;border-radius:13px"></div>
<div class="a" style="left:396.1px;top:1125.5px;width:479.2px;height:219.8px;border-radius:8px;overflow:hidden;background:#1c1c1c"><svg width="479.2" height="219.8" viewBox="0 0 479 220" preserveAspectRatio="none" style="display:block"><defs><filter id="bl" x="-5%" y="-20%" width="110%" height="140%"><feGaussianBlur stdDeviation="0.45"/></filter></defs><g filter="url(#bl)"><rect x="0" y="0" width="479" height="10.5" rx="0" fill="#232329" opacity="1"/><circle cx="5" cy="5" r="1.6" fill="#c0392b" opacity="0.7"/><circle cx="12" cy="5" r="1.6" fill="#2ecc71" opacity="0.5"/><circle cx="24" cy="5" r="1.8" fill="#d0d0d8" opacity="0.6"/><text x="28" y="6.25" font-family="Liberation Sans" font-size="4.14" fill="#8a8a95" opacity="0.47" textLength="35.9" lengthAdjust="spacingAndGlyphs">employee project</text><circle cx="83.88599317799795" cy="5" r="1.8" fill="#d0d0d8" opacity="0.6"/><text x="87.88599317799795" y="6.25" font-family="Liberation Sans" font-size="4.14" fill="#8a8a95" opacity="0.47" textLength="39.8" lengthAdjust="spacingAndGlyphs">performance your st</text><circle cx="147.69720685447618" cy="5" r="1.8" fill="#d0d0d8" opacity="0.6"/><text x="151.69720685447618" y="6.25" font-family="Liberation Sans" font-size="4.14" fill="#8a8a95" opacity="0.47" textLength="33.1" lengthAdjust="spacingAndGlyphs">daily and check</text><circle cx="204.82676735775237" cy="5" r="1.8" fill="#d0d0d8" opacity="0.6"/><text x="208.82676735775237" y="6.25" font-family="Liberation Sans" font-size="4.14" fill="#8a8a95" opacity="0.47" textLength="38.1" lengthAdjust="spacingAndGlyphs">and performance time</text><circle cx="266.9159961560254" cy="5" r="1.8" fill="#d0d0d8" opacity="0.6"/><text x="270.9159961560254" y="6.25" font-family="Liberation Sans" font-size="4.14" fill="#8a8a95" opacity="0.47" textLength="37.0" lengthAdjust="spacingAndGlyphs">goals performance</text><circle cx="327.9340619724745" cy="5" r="1.8" fill="#d0d0d8" opacity="0.6"/><text x="331.9340619724745" y="6.25" font-family="Liberation Sans" font-size="4.14" fill="#8a8a95" opacity="0.47" textLength="38.6" lengthAdjust="spacingAndGlyphs">and your daily mon</text><circle cx="390.54662901797116" cy="5" r="1.8" fill="#d0d0d8" opacity="0.6"/><text x="394.54662901797116" y="6.25" font-family="Liberation Sans" font-size="4.14" fill="#8a8a95" opacity="0.47" textLength="43.4" lengthAdjust="spacingAndGlyphs">for for daily progress</text><rect x="0" y="10.5" width="479" height="11.5" rx="0" fill="#2d3039" opacity="1"/><rect x="44" y="12.5" width="300" height="7" rx="3.5" fill="#23262d" opacity="1"/><text x="60" y="17.50" font-family="Liberation Sans" font-size="4.6" fill="#9aa0ac" opacity="0.47" textLength="140.0" lengthAdjust="spacingAndGlyphs">and daily daily project and goals and status about employee</text><circle cx="360" cy="16" r="2.5" fill="#3a88c8" opacity="0.8"/><circle cx="378" cy="16" r="2.5" fill="#d64545" opacity="0.7"/><circle cx="405" cy="16" r="2.5" fill="#2ecc71" opacity="0.6"/><circle cx="418" cy="16" r="2.8" fill="#e0506a" opacity="0.8"/><rect x="425" y="12.5" width="50" height="7" rx="2" fill="#3a3f72" opacity="1"/><text x="428" y="17.50" font-family="Liberation Sans" font-size="4.6" fill="#9aa5d8" opacity="0.55" textLength="42.0" lengthAdjust="spacingAndGlyphs">data time employee</text><rect x="0" y="22" width="479" height="11" rx="0" fill="#0b0b0b" opacity="1"/><rect x="128" y="23" width="223" height="9" rx="1.5" fill="#1f1f1f" opacity="1"/><text x="160" y="29.00" font-family="Liberation Sans" font-size="4.6" fill="#777" opacity="0.47" textLength="50.0" lengthAdjust="spacingAndGlyphs">status monitoring daily</text><rect x="0" y="33" width="22.5" height="187" rx="0" fill="#121212" opacity="1"/><rect x="22.5" y="33" width="104" height="187" rx="0" fill="#1a1a1a" opacity="1"/><rect x="126.5" y="33" width="352.5" height="187" rx="0" fill="#1d1d1d" opacity="1"/><rect x="4" y="24" width="10" height="6" rx="1" fill="#5a5ac8" opacity="0.7"/><circle cx="11" cy="45" r="3" fill="#8b8bd8" opacity="0.5"/><circle cx="11" cy="63" r="3" fill="#8b8bd8" opacity="0.6"/><rect x="0" y="58" width="2" height="14" rx="0" fill="#7070d0" opacity="0.6"/><text x="32" y="47.75" font-family="Liberation Sans" font-size="6.9" fill="#d8d8d8" opacity="0.66" textLength="16.0" lengthAdjust="spacingAndGlyphs">Chat</text><text x="32" y="56.25" font-family="Liberation Sans" font-size="4.14" fill="#777" opacity="0.39" textLength="80.0" lengthAdjust="spacingAndGlyphs">data status your from tasks monitoring</text><circle cx="36" cy="61" r="2.6" fill="#666" opacity="0.7"/><text x="42" y="62.75" font-family="Liberation Sans" font-size="5.06" fill="#999" opacity="0.47" textLength="44.5" lengthAdjust="spacingAndGlyphs">for review update</text><circle cx="36" cy="68.5" r="2.6" fill="#666" opacity="0.7"/><text x="42" y="70.25" font-family="Liberation Sans" font-size="5.06" fill="#999" opacity="0.47" textLength="32.4" lengthAdjust="spacingAndGlyphs">that perform</text><circle cx="36" cy="76" r="2.6" fill="#666" opacity="0.7"/><text x="42" y="77.75" font-family="Liberation Sans" font-size="5.06" fill="#999" opacity="0.47" textLength="44.1" lengthAdjust="spacingAndGlyphs">with review report</text><text x="30" y="85.25" font-family="Liberation Sans" font-size="4.14" fill="#777" opacity="0.39" textLength="28.0" lengthAdjust="spacingAndGlyphs">from status</text><circle cx="36" cy="91.5" r="2.8" fill="#ddd" opacity="0.9"/><text x="42" y="93.25" font-family="Liberation Sans" font-size="5.06" fill="#a0a0a0" opacity="0.47" textLength="70.0" lengthAdjust="spacingAndGlyphs">time have team work daily</text><text x="30" y="101.25" font-family="Liberation Sans" font-size="4.14" fill="#777" opacity="0.39" textLength="16.0" lengthAdjust="spacingAndGlyphs">check</text><rect x="27" y="105" width="98" height="8" rx="0" fill="#262626" opacity="1"/><circle cx="36" cy="108.5" r="2.6" fill="#aaa" opacity="0.8"/><text x="42" y="110.25" font-family="Liberation Sans" font-size="5.06" fill="#b0b0b0" opacity="0.55" textLength="51.3" lengthAdjust="spacingAndGlyphs">data goals will tasks</text><circle cx="36" cy="116" r="2.6" fill="#aaa" opacity="0.8"/><text x="42" y="117.75" font-family="Liberation Sans" font-size="5.06" fill="#b0b0b0" opacity="0.55" textLength="57.5" lengthAdjust="spacingAndGlyphs">goals performance daily</text><circle cx="36" cy="123.5" r="2.6" fill="#aaa" opacity="0.8"/><text x="42" y="125.25" font-family="Liberation Sans" font-size="5.06" fill="#b0b0b0" opacity="0.55" textLength="47.5" lengthAdjust="spacingAndGlyphs">report meeting team</text><text x="30" y="133.25" font-family="Liberation Sans" font-size="4.14" fill="#a03050" opacity="0.39" textLength="60.0" lengthAdjust="spacingAndGlyphs">this work data with performa</text><rect x="33" y="136" width="7" height="6" rx="1" fill="#50c0a0" opacity="0.8"/><text x="42" y="140.75" font-family="Liberation Sans" font-size="5.06" fill="#bbb" opacity="0.62" textLength="50.0" lengthAdjust="spacingAndGlyphs">monitoring member</text><text x="42" y="147.75" font-family="Liberation Sans" font-size="5.06" fill="#888" opacity="0.55" textLength="40.0" lengthAdjust="spacingAndGlyphs">time tasks have</text><text x="42" y="154.75" font-family="Liberation Sans" font-size="5.06" fill="#888" opacity="0.55" textLength="70.0" lengthAdjust="spacingAndGlyphs">team employee check report</text><text x="42" y="162.75" font-family="Liberation Sans" font-size="5.06" fill="#888" opacity="0.55" textLength="40.0" lengthAdjust="spacingAndGlyphs">time and progress</text><text x="42" y="169.75" font-family="Liberation Sans" font-size="5.06" fill="#ddd" opacity="0.55" textLength="48.0" lengthAdjust="spacingAndGlyphs">from performance</text><text x="42" y="177.75" font-family="Liberation Sans" font-size="5.06" fill="#ddd" opacity="0.55" textLength="55.0" lengthAdjust="spacingAndGlyphs">have status daily will</text><text x="42" y="184.75" font-family="Liberation Sans" font-size="5.06" fill="#ddd" opacity="0.55" textLength="25.0" lengthAdjust="spacingAndGlyphs">meeting</text><text x="30" y="192.50" font-family="Liberation Sans" font-size="4.6" fill="#6060c0" opacity="0.55" textLength="40.0" lengthAdjust="spacingAndGlyphs">your team team that</text><circle cx="133" cy="43" r="3.5" fill="#ddd" opacity="0.9"/><text x="140" y="45.25" font-family="Liberation Sans" font-size="6.9" fill="#ddd" opacity="0.70" textLength="62.0" lengthAdjust="spacingAndGlyphs">Asinul Rahman Jahin</text><text x="210" y="44.50" font-family="Liberation Sans" font-size="4.6" fill="#aaa" opacity="0.47" textLength="30.0" lengthAdjust="spacingAndGlyphs">update with</text><text x="430" y="44.50" font-family="Liberation Sans" font-size="4.6" fill="#888" opacity="0.39" textLength="40.0" lengthAdjust="spacingAndGlyphs">report daily will</text><rect x="340" y="42" width="120" height="40" rx="2" fill="#24243a" opacity="1"/><rect x="353" y="47.6" width="96" height="22" rx="0" fill="#f2f2f2" opacity="1"/><rect x="360" y="51.0" width="85" height="0.6" rx="0" fill="#cfcfcf" opacity="1"/><rect x="360" y="54.5" width="85" height="0.6" rx="0" fill="#cfcfcf" opacity="1"/><rect x="360" y="58.0" width="85" height="0.6" rx="0" fill="#cfcfcf" opacity="1"/><rect x="360" y="61.5" width="85" height="0.6" rx="0" fill="#cfcfcf" opacity="1"/><rect x="360" y="65.0" width="85" height="0.6" rx="0" fill="#cfcfcf" opacity="1"/><text x="355" y="75.50" font-family="Liberation Sans" font-size="4.6" fill="#b0b0c0" opacity="0.55" textLength="60.0" lengthAdjust="spacingAndGlyphs">work performance your perf</text><circle cx="432" cy="79" r="2" fill="#f0d060" opacity="0.8"/><circle cx="442" cy="79" r="2" fill="#777" opacity="0.6"/><text x="150" y="87.00" font-family="Liberation Sans" font-size="3.68" fill="#666" opacity="0.39" textLength="70.0" lengthAdjust="spacingAndGlyphs">progress feedback report that from per</text><circle cx="144" cy="93" r="3.3" fill="#d8d8c8" opacity="0.9"/><rect x="153" y="89" width="70" height="9" rx="1.5" fill="#262626" opacity="1"/><text x="156" y="95.25" font-family="Liberation Sans" font-size="5.06" fill="#bbb" opacity="0.62" textLength="50.0" lengthAdjust="spacingAndGlyphs">and this that data</text><text x="150" y="113.00" font-family="Liberation Sans" font-size="3.68" fill="#666" opacity="0.39" textLength="70.0" lengthAdjust="spacingAndGlyphs">for daily from your work data that pro</text><circle cx="144" cy="117" r="3.3" fill="#d8d8c8" opacity="0.9"/><rect x="153" y="113" width="168" height="32" rx="1.5" fill="#252525" opacity="1"/><rect x="157" y="117" width="1" height="16" rx="0" fill="#999" opacity="0.6"/><text x="162" y="119.50" font-family="Liberation Sans" font-size="4.6" fill="#bbb" opacity="0.47" textLength="80.0" lengthAdjust="spacingAndGlyphs">meeting from update the progress</text><text x="162" y="125.50" font-family="Liberation Sans" font-size="4.6" fill="#ccc" opacity="0.55" textLength="150.0" lengthAdjust="spacingAndGlyphs">work update tasks with monitoring report and review have data emp</text><text x="162" y="130.50" font-family="Liberation Sans" font-size="4.6" fill="#ccc" opacity="0.55" textLength="150.0" lengthAdjust="spacingAndGlyphs">this goals project project check about report performance tasks</text><text x="157" y="138.50" font-family="Liberation Sans" font-size="4.6" fill="#ccc" opacity="0.55" textLength="100.0" lengthAdjust="spacingAndGlyphs">work project status feedback meeting employee</text><text x="157" y="146.50" font-family="Liberation Sans" font-size="4.6" fill="#ccc" opacity="0.55" textLength="25.0" lengthAdjust="spacingAndGlyphs">your time</text><text x="338" y="157.88" font-family="Liberation Sans" font-size="3.45" fill="#777" opacity="0.39" textLength="20.0" lengthAdjust="spacingAndGlyphs">about status</text><rect x="334" y="160" width="40" height="7" rx="1.5" fill="#2a2b48" opacity="1"/><text x="337" y="165.00" font-family="Liberation Sans" font-size="4.6" fill="#b8b8e0" opacity="0.55" textLength="28.0" lengthAdjust="spacingAndGlyphs">feedback that</text><text x="225" y="173.88" font-family="Liberation Sans" font-size="3.45" fill="#777" opacity="0.39" textLength="15.0" lengthAdjust="spacingAndGlyphs">time upd</text><circle cx="300.0" cy="177" r="2.2" fill="#f0c060" opacity="0.8"/><circle cx="311.5" cy="177" r="2.2" fill="#e04060" opacity="0.8"/><circle cx="323.0" cy="177" r="2.2" fill="#e04060" opacity="0.8"/><circle cx="334.5" cy="177" r="2.2" fill="#e05060" opacity="0.8"/><circle cx="346.0" cy="177" r="2.2" fill="#888" opacity="0.8"/><circle cx="357.5" cy="177" r="2.2" fill="#888" opacity="0.8"/><rect x="187" y="180" width="272" height="15" rx="1.5" fill="#2c2c4a" opacity="1"/><text x="192" y="185.50" font-family="Liberation Sans" font-size="4.6" fill="#b8b8d8" opacity="0.58" textLength="262.0" lengthAdjust="spacingAndGlyphs">from meeting project progress goals employee performance tasks employee goals from goals the report your daily ta</text><text x="192" y="190.50" font-family="Liberation Sans" font-size="4.6" fill="#b8b8d8" opacity="0.58" textLength="40.0" lengthAdjust="spacingAndGlyphs">feedback data the</text><rect x="150" y="201" width="308" height="14" rx="2" fill="#272727" opacity="1"/><text x="160" y="209.25" font-family="Liberation Sans" font-size="4.14" fill="#777" opacity="0.47" textLength="40.0" lengthAdjust="spacingAndGlyphs">employee time status</text><rect x="385" y="204.5" width="16" height="6" rx="3" fill="#7de0c0" opacity="0.8"/><circle cx="412" cy="208" r="2" fill="#777" opacity="0.6"/><circle cx="423" cy="208" r="2" fill="#777" opacity="0.6"/><circle cx="434" cy="208" r="2" fill="#777" opacity="0.6"/><circle cx="445" cy="208" r="2" fill="#777" opacity="0.6"/></g></svg></div>
<div class="a" style="left:912.55px;top:1032.85px;width:513.6px;height:469px;background:#fff;border:1.5px solid #c4cfe3;border-radius:13px"></div>
<div class="a" style="left:930.2px;top:1125.5px;width:479.2px;height:219.8px;border-radius:8px;overflow:hidden;background:#1c1c1c"><svg width="479.2" height="219.8" viewBox="0 0 479 220" preserveAspectRatio="none" style="display:block"><defs><filter id="bl" x="-5%" y="-20%" width="110%" height="140%"><feGaussianBlur stdDeviation="0.45"/></filter></defs><g filter="url(#bl)"><rect x="0" y="0" width="479" height="10.5" rx="0" fill="#232329" opacity="1"/><circle cx="5" cy="5" r="1.6" fill="#c0392b" opacity="0.7"/><circle cx="12" cy="5" r="1.6" fill="#2ecc71" opacity="0.5"/><circle cx="24" cy="5" r="1.8" fill="#d0d0d8" opacity="0.6"/><text x="28" y="6.25" font-family="Liberation Sans" font-size="4.14" fill="#8a8a95" opacity="0.47" textLength="36.4" lengthAdjust="spacingAndGlyphs">daily team progress</text><circle cx="84.4310428747367" cy="5" r="1.8" fill="#d0d0d8" opacity="0.6"/><text x="88.4310428747367" y="6.25" font-family="Liberation Sans" font-size="4.14" fill="#8a8a95" opacity="0.47" textLength="33.5" lengthAdjust="spacingAndGlyphs">about member pro</text><circle cx="141.93694102468842" cy="5" r="1.8" fill="#d0d0d8" opacity="0.6"/><text x="145.93694102468842" y="6.25" font-family="Liberation Sans" font-size="4.14" fill="#8a8a95" opacity="0.47" textLength="39.4" lengthAdjust="spacingAndGlyphs">from this and work</text><circle cx="205.34805401759795" cy="5" r="1.8" fill="#d0d0d8" opacity="0.6"/><text x="209.34805401759795" y="6.25" font-family="Liberation Sans" font-size="4.14" fill="#8a8a95" opacity="0.47" textLength="42.8" lengthAdjust="spacingAndGlyphs">have progress about</text><circle cx="272.1424501382934" cy="5" r="1.8" fill="#d0d0d8" opacity="0.6"/><text x="276.1424501382934" y="6.25" font-family="Liberation Sans" font-size="4.14" fill="#8a8a95" opacity="0.47" textLength="40.2" lengthAdjust="spacingAndGlyphs">status project proj</text><circle cx="336.3093513510339" cy="5" r="1.8" fill="#d0d0d8" opacity="0.6"/><text x="340.3093513510339" y="6.25" font-family="Liberation Sans" font-size="4.14" fill="#8a8a95" opacity="0.47" textLength="36.8" lengthAdjust="spacingAndGlyphs">monitoring report</text><circle cx="397.0970973388772" cy="5" r="1.8" fill="#d0d0d8" opacity="0.6"/><text x="401.0970973388772" y="6.25" font-family="Liberation Sans" font-size="4.14" fill="#8a8a95" opacity="0.47" textLength="39.6" lengthAdjust="spacingAndGlyphs">and review performa</text><rect x="0" y="10.5" width="479" height="11.5" rx="0" fill="#2d3039" opacity="1"/><rect x="44" y="12.5" width="300" height="7" rx="3.5" fill="#23262d" opacity="1"/><text x="60" y="17.50" font-family="Liberation Sans" font-size="4.6" fill="#9aa0ac" opacity="0.47" textLength="140.0" lengthAdjust="spacingAndGlyphs">review work tasks monitoring team with and monitoring the da</text><circle cx="360" cy="16" r="2.5" fill="#3a88c8" opacity="0.8"/><circle cx="378" cy="16" r="2.5" fill="#d64545" opacity="0.7"/><circle cx="405" cy="16" r="2.5" fill="#2ecc71" opacity="0.6"/><circle cx="418" cy="16" r="2.8" fill="#e0506a" opacity="0.8"/><rect x="425" y="12.5" width="50" height="7" rx="2" fill="#3a3f72" opacity="1"/><text x="428" y="17.50" font-family="Liberation Sans" font-size="4.6" fill="#9aa5d8" opacity="0.55" textLength="42.0" lengthAdjust="spacingAndGlyphs">employee status mo</text><rect x="0" y="22" width="479" height="198" rx="0" fill="#1f1f1f" opacity="1"/><text x="7" y="38.50" font-family="Liberation Sans" font-size="13.8" fill="#e8e8e8" opacity="0.62" textLength="30.0" lengthAdjust="spacingAndGlyphs">Google</text><rect x="54" y="28" width="284" height="13" rx="6.5" fill="#303134" opacity="1"/><text x="62" y="36.00" font-family="Liberation Sans" font-size="5.52" fill="#c8c8c8" opacity="0.55" textLength="140.0" lengthAdjust="spacingAndGlyphs">progress update with the performance about review</text><text x="260" y="36.00" font-family="Liberation Sans" font-size="5.52" fill="#999" opacity="0.39" textLength="70.0" lengthAdjust="spacingAndGlyphs">with project employee for</text><circle cx="351" cy="34" r="5.5" fill="#f0a020" opacity="0.9"/><circle cx="435" cy="34" r="2" fill="#aaa" opacity="0.6"/><circle cx="450" cy="34" r="2" fill="#aaa" opacity="0.5"/><circle cx="465" cy="34" r="5" fill="#e8456a" opacity="0.9"/><text x="59" y="45.75" font-family="Liberation Sans" font-size="4.14" fill="#888" opacity="0.39" textLength="110.0" lengthAdjust="spacingAndGlyphs">feedback progress update with update report monitoring</text><text x="300" y="45.75" font-family="Liberation Sans" font-size="4.14" fill="#aaa" opacity="0.39" textLength="40.0" lengthAdjust="spacingAndGlyphs">monitoring about re</text><text x="59" y="55.50" font-family="Liberation Sans" font-size="4.6" fill="#888" opacity="0.47" textLength="180.0" lengthAdjust="spacingAndGlyphs">work report report data performance employee monitoring this team this feedback</text><rect x="83" y="56" width="6" height="0.8" rx="0" fill="#ccc" opacity="0.6"/><circle cx="62" cy="67" r="2" fill="#8ab4f8" opacity="0.7"/><text x="66" y="68.50" font-family="Liberation Sans" font-size="4.6" fill="#ccc" opacity="0.55" textLength="25.0" lengthAdjust="spacingAndGlyphs">report your</text><text x="410" y="68.50" font-family="Liberation Sans" font-size="4.6" fill="#777" opacity="0.39" textLength="5.0" lengthAdjust="spacingAndGlyphs"></text><rect x="59" y="75" width="20" height="8" rx="4" fill="#3a3a3a" opacity="1"/><rect x="68" y="75" width="14" height="8" rx="4" fill="#8ab4f8" opacity="0.6"/><text x="59" y="90.75" font-family="Liberation Sans" font-size="5.06" fill="#aaa" opacity="0.55" textLength="140.0" lengthAdjust="spacingAndGlyphs">that tasks member the review progress progress member</text><rect x="180" y="86" width="42" height="5" rx="1" fill="#3d5aa0" opacity="0.9"/><rect x="59" y="92.0" width="155.42628688513517" height="5" rx="0.5" fill="#3b5298" opacity="0.85"/><text x="60" y="96.25" font-family="Liberation Sans" font-size="5.06" fill="#dfe6ff" opacity="0.43" textLength="155.0" lengthAdjust="spacingAndGlyphs">that status check the have member data for about performance</text><rect x="59" y="97.5" width="160.44295178861702" height="5" rx="0.5" fill="#3b5298" opacity="0.85"/><text x="60" y="101.75" font-family="Liberation Sans" font-size="5.06" fill="#dfe6ff" opacity="0.43" textLength="155.0" lengthAdjust="spacingAndGlyphs">feedback member update check tasks update have goals status</text><rect x="59" y="103.0" width="158.12350684170292" height="5" rx="0.5" fill="#3b5298" opacity="0.85"/><text x="60" y="107.25" font-family="Liberation Sans" font-size="5.06" fill="#dfe6ff" opacity="0.43" textLength="155.0" lengthAdjust="spacingAndGlyphs">member team for goals with will will have about review will</text><rect x="59" y="108.5" width="153.5908151214942" height="5" rx="0.5" fill="#3b5298" opacity="0.85"/><text x="60" y="112.75" font-family="Liberation Sans" font-size="5.06" fill="#dfe6ff" opacity="0.43" textLength="155.0" lengthAdjust="spacingAndGlyphs">project this will goals review member report update this the</text><text x="60" y="118.75" font-family="Liberation Sans" font-size="5.06" fill="#aaa" opacity="0.55" textLength="170.0" lengthAdjust="spacingAndGlyphs">the will feedback report feedback review that with progress update</text><text x="60" y="124.75" font-family="Liberation Sans" font-size="5.06" fill="#aaa" opacity="0.55" textLength="168.0" lengthAdjust="spacingAndGlyphs">work will check this update progress update performance goals moni</text><text x="60" y="130.50" font-family="Liberation Sans" font-size="4.6" fill="#777" opacity="0.39" textLength="60.0" lengthAdjust="spacingAndGlyphs">goals report review team</text><rect x="230" y="86.5" width="40" height="25" rx="3" fill="#f4f4fa" opacity="1"/><text x="234" y="95.12" font-family="Liberation Sans" font-size="5.75" fill="#7080d0" opacity="0.62" textLength="32.0" lengthAdjust="spacingAndGlyphs">review report</text><text x="236" y="103.75" font-family="Liberation Sans" font-size="6.9" fill="#6070c8" opacity="0.55" textLength="30.0" lengthAdjust="spacingAndGlyphs">with mee</text><rect x="285" y="88" width="136" height="48" rx="2" fill="#29292e" opacity="1"/><text x="290" y="96.00" font-family="Liberation Sans" font-size="5.52" fill="#d8d8d8" opacity="0.62" textLength="70.0" lengthAdjust="spacingAndGlyphs">with your the report check</text><text x="290" y="101.00" font-family="Liberation Sans" font-size="5.52" fill="#d8d8d8" opacity="0.62" textLength="60.0" lengthAdjust="spacingAndGlyphs">for update will for</text><text x="290" y="106.50" font-family="Liberation Sans" font-size="4.6" fill="#999" opacity="0.47" textLength="75.0" lengthAdjust="spacingAndGlyphs">performance your from monitoring</text><text x="290" y="111.50" font-family="Liberation Sans" font-size="4.6" fill="#999" opacity="0.47" textLength="75.0" lengthAdjust="spacingAndGlyphs">check project will that have rev</text><circle cx="292" cy="117" r="2" fill="#f0c040" opacity="0.6"/><text x="297" y="118.50" font-family="Liberation Sans" font-size="4.6" fill="#888" opacity="0.39" textLength="25.0" lengthAdjust="spacingAndGlyphs">report mee</text><rect x="391" y="89" width="30" height="21" rx="1" fill="#5a7aa8" opacity="0.85"/><rect x="395" y="95" width="20" height="10" rx="1" fill="#a8c8e8" opacity="0.6"/><text x="290" y="133.25" font-family="Liberation Sans" font-size="4.14" fill="#666" opacity="0.39" textLength="90.0" lengthAdjust="spacingAndGlyphs">tasks time will for team performance will</text><rect x="392" y="127" width="28" height="6" rx="1" fill="#2a4a3a" opacity="0.7"/><rect x="59" y="140" width="235" height="14" rx="3" fill="#242424" opacity="1"/><text x="148" y="148.50" font-family="Liberation Sans" font-size="4.6" fill="#aaa" opacity="0.47" textLength="30.0" lengthAdjust="spacingAndGlyphs">progress this</text><rect x="59" y="158" width="360" height="0.6" rx="0" fill="#444" opacity="1"/><text x="59" y="175.75" font-family="Liberation Sans" font-size="10.58" fill="#dcdcdc" opacity="0.62" textLength="169.0" lengthAdjust="spacingAndGlyphs">Ways to monitor employee performance</text><text x="59" y="181.50" font-family="Liberation Sans" font-size="4.6" fill="#777" opacity="0.39" textLength="60.0" lengthAdjust="spacingAndGlyphs">project work project this</text><text x="59" y="195.00" font-family="Liberation Sans" font-size="5.52" fill="#bbb" opacity="0.55" textLength="55.0" lengthAdjust="spacingAndGlyphs">progress performance</text><text x="179" y="193.88" font-family="Liberation Sans" font-size="3.45" fill="#888" opacity="0.39" textLength="3.0" lengthAdjust="spacingAndGlyphs"></text><text x="185" y="195.00" font-family="Liberation Sans" font-size="5.52" fill="#bbb" opacity="0.55" textLength="75.0" lengthAdjust="spacingAndGlyphs">this tasks tasks employee</text><text x="305" y="193.88" font-family="Liberation Sans" font-size="3.45" fill="#888" opacity="0.39" textLength="3.0" lengthAdjust="spacingAndGlyphs"></text><text x="310" y="195.00" font-family="Liberation Sans" font-size="5.52" fill="#bbb" opacity="0.55" textLength="45.0" lengthAdjust="spacingAndGlyphs">the employee daily</text><text x="420" y="193.88" font-family="Liberation Sans" font-size="3.45" fill="#888" opacity="0.39" textLength="3.0" lengthAdjust="spacingAndGlyphs"></text><rect x="59" y="199" width="360" height="0.5" rx="0" fill="#3a3a3a" opacity="1"/><text x="59" y="212.00" font-family="Liberation Sans" font-size="5.52" fill="#bbb" opacity="0.55" textLength="55.0" lengthAdjust="spacingAndGlyphs">meeting work will</text><text x="179" y="210.88" font-family="Liberation Sans" font-size="3.45" fill="#888" opacity="0.39" textLength="3.0" lengthAdjust="spacingAndGlyphs"></text><text x="185" y="212.00" font-family="Liberation Sans" font-size="5.52" fill="#bbb" opacity="0.55" textLength="75.0" lengthAdjust="spacingAndGlyphs">for employee with your with</text><text x="305" y="210.88" font-family="Liberation Sans" font-size="3.45" fill="#888" opacity="0.39" textLength="3.0" lengthAdjust="spacingAndGlyphs"></text><text x="310" y="212.00" font-family="Liberation Sans" font-size="5.52" fill="#bbb" opacity="0.55" textLength="45.0" lengthAdjust="spacingAndGlyphs">report from check</text><text x="420" y="210.88" font-family="Liberation Sans" font-size="3.45" fill="#888" opacity="0.39" textLength="3.0" lengthAdjust="spacingAndGlyphs"></text><rect x="59" y="216" width="360" height="0.5" rx="0" fill="#3a3a3a" opacity="1"/></g></svg></div>
<div class="a" style="left:1445.95px;top:1032.85px;width:513.6px;height:469px;background:#fff;border:1.5px solid #c4cfe3;border-radius:13px"></div>
<div class="a" style="left:1463.6px;top:1125.5px;width:479.2px;height:219.8px;border-radius:8px;overflow:hidden;background:#1c1c1c"><svg width="479.2" height="219.8" viewBox="0 0 479 220" preserveAspectRatio="none" style="display:block"><defs><filter id="bl" x="-5%" y="-20%" width="110%" height="140%"><feGaussianBlur stdDeviation="0.45"/></filter></defs><g filter="url(#bl)"><rect x="0" y="0" width="479" height="10.5" rx="0" fill="#232329" opacity="1"/><circle cx="5" cy="5" r="1.6" fill="#c0392b" opacity="0.7"/><circle cx="12" cy="5" r="1.6" fill="#2ecc71" opacity="0.5"/><circle cx="24" cy="5" r="1.8" fill="#d0d0d8" opacity="0.6"/><text x="28" y="6.25" font-family="Liberation Sans" font-size="4.14" fill="#8a8a95" opacity="0.47" textLength="36.2" lengthAdjust="spacingAndGlyphs">status status emp</text><circle cx="84.20489014589003" cy="5" r="1.8" fill="#d0d0d8" opacity="0.6"/><text x="88.20489014589003" y="6.25" font-family="Liberation Sans" font-size="4.14" fill="#8a8a95" opacity="0.47" textLength="32.3" lengthAdjust="spacingAndGlyphs">will this for</text><circle cx="140.46165023775296" cy="5" r="1.8" fill="#d0d0d8" opacity="0.6"/><text x="144.46165023775296" y="6.25" font-family="Liberation Sans" font-size="4.14" fill="#8a8a95" opacity="0.47" textLength="33.2" lengthAdjust="spacingAndGlyphs">this check emplo</text><circle cx="197.69491488010314" cy="5" r="1.8" fill="#d0d0d8" opacity="0.6"/><text x="201.69491488010314" y="6.25" font-family="Liberation Sans" font-size="4.14" fill="#8a8a95" opacity="0.47" textLength="37.2" lengthAdjust="spacingAndGlyphs">about review your</text><circle cx="258.900628121193" cy="5" r="1.8" fill="#d0d0d8" opacity="0.6"/><text x="262.900628121193" y="6.25" font-family="Liberation Sans" font-size="4.14" fill="#8a8a95" opacity="0.47" textLength="42.5" lengthAdjust="spacingAndGlyphs">the feedback review</text><circle cx="325.38751034983943" cy="5" r="1.8" fill="#d0d0d8" opacity="0.6"/><text x="329.38751034983943" y="6.25" font-family="Liberation Sans" font-size="4.14" fill="#8a8a95" opacity="0.47" textLength="35.5" lengthAdjust="spacingAndGlyphs">goals have daily</text><circle cx="384.9031101818821" cy="5" r="1.8" fill="#d0d0d8" opacity="0.6"/><text x="388.9031101818821" y="6.25" font-family="Liberation Sans" font-size="4.14" fill="#8a8a95" opacity="0.47" textLength="35.9" lengthAdjust="spacingAndGlyphs">status time your</text><rect x="0" y="10.5" width="479" height="11.5" rx="0" fill="#2d3039" opacity="1"/><rect x="44" y="12.5" width="300" height="7" rx="3.5" fill="#23262d" opacity="1"/><text x="60" y="17.50" font-family="Liberation Sans" font-size="4.6" fill="#9aa0ac" opacity="0.47" textLength="140.0" lengthAdjust="spacingAndGlyphs">employee and check this update meeting work from daily your</text><circle cx="360" cy="16" r="2.5" fill="#3a88c8" opacity="0.8"/><circle cx="378" cy="16" r="2.5" fill="#d64545" opacity="0.7"/><circle cx="405" cy="16" r="2.5" fill="#2ecc71" opacity="0.6"/><circle cx="418" cy="16" r="2.8" fill="#e0506a" opacity="0.8"/><rect x="425" y="12.5" width="50" height="7" rx="2" fill="#3a3f72" opacity="1"/><text x="428" y="17.50" font-family="Liberation Sans" font-size="4.6" fill="#9aa5d8" opacity="0.55" textLength="42.0" lengthAdjust="spacingAndGlyphs">meeting member time</text><rect x="0" y="22" width="479" height="198" rx="0" fill="#1f1f1f" opacity="1"/><text x="7" y="32.50" font-family="Liberation Sans" font-size="13.8" fill="#e8e8e8" opacity="0.62" textLength="30.0" lengthAdjust="spacingAndGlyphs">Google</text><rect x="53" y="24" width="287" height="9" rx="4.5" fill="#5b5b60" opacity="1"/><text x="60" y="30.50" font-family="Liberation Sans" font-size="5.52" fill="#e0e0e0" opacity="0.47" textLength="120.0" lengthAdjust="spacingAndGlyphs">your check meeting member employee status</text><text x="260" y="30.50" font-family="Liberation Sans" font-size="5.52" fill="#bbb" opacity="0.39" textLength="70.0" lengthAdjust="spacingAndGlyphs">employee member member the</text><circle cx="352.6" cy="29" r="5.5" fill="#f0a020" opacity="0.9"/><circle cx="437" cy="29" r="2.2" fill="#ccc" opacity="0.6"/><circle cx="451" cy="29" r="2" fill="#aaa" opacity="0.5"/><circle cx="465" cy="28.5" r="5" fill="#e8456a" opacity="0.9"/><circle cx="64" cy="38" r="3.5" fill="#ddd" opacity="0.8"/><text x="70" y="39.12" font-family="Liberation Sans" font-size="5.75" fill="#bbb" opacity="0.47" textLength="100.0" lengthAdjust="spacingAndGlyphs">about work have tasks with the have</text><text x="70" y="43.25" font-family="Liberation Sans" font-size="4.14" fill="#777" opacity="0.39" textLength="40.0" lengthAdjust="spacingAndGlyphs">will employee tasks</text><text x="300" y="41.50" font-family="Liberation Sans" font-size="4.6" fill="#aaa" opacity="0.39" textLength="60.0" lengthAdjust="spacingAndGlyphs">employee report with this</text><rect x="59" y="51" width="18" height="5" rx="0.5" fill="#5a4a60" opacity="0.8"/><text x="97" y="55.25" font-family="Liberation Sans" font-size="5.98" fill="#ddd" opacity="0.62" textLength="25.0" lengthAdjust="spacingAndGlyphs">monitoring</text><rect x="96" y="50" width="27" height="6" rx="0.5" fill="#4a4a4a" opacity="0.4"/><text x="175" y="55.25" font-family="Liberation Sans" font-size="5.98" fill="#ddd" opacity="0.62" textLength="60.0" lengthAdjust="spacingAndGlyphs">status and team from</text><rect x="174" y="50" width="62" height="6" rx="0.5" fill="#4a4a4a" opacity="0.4"/><rect x="59" y="63.0" width="18" height="8" rx="0.5" fill="#6a5070" opacity="0.9"/><text x="97" y="67.25" font-family="Liberation Sans" font-size="5.06" fill="#aaa" opacity="0.51" textLength="56.9" lengthAdjust="spacingAndGlyphs">status report will have</text><text x="175" y="67.25" font-family="Liberation Sans" font-size="5.06" fill="#aaa" opacity="0.51" textLength="82.1" lengthAdjust="spacingAndGlyphs">status and goals review feedback</text><text x="97" y="72.25" font-family="Liberation Sans" font-size="5.06" fill="#aaa" opacity="0.51" textLength="46.0" lengthAdjust="spacingAndGlyphs">monitoring member</text><text x="175" y="72.25" font-family="Liberation Sans" font-size="5.06" fill="#aaa" opacity="0.51" textLength="89.0" lengthAdjust="spacingAndGlyphs">the have meeting check performance</text><text x="97" y="77.25" font-family="Liberation Sans" font-size="5.06" fill="#aaa" opacity="0.51" textLength="55.2" lengthAdjust="spacingAndGlyphs">with member with member</text><text x="175" y="77.25" font-family="Liberation Sans" font-size="5.06" fill="#aaa" opacity="0.51" textLength="84.0" lengthAdjust="spacingAndGlyphs">feedback work member status will</text><rect x="59" y="81.5" width="220" height="0.5" rx="0" fill="#3a3a3a" opacity="1"/><text x="59" y="95.00" font-family="Liberation Sans" font-size="5.52" fill="#ddd" opacity="0.58" textLength="20.7" lengthAdjust="spacingAndGlyphs">progress</text><text x="97" y="94.75" font-family="Liberation Sans" font-size="5.06" fill="#aaa" opacity="0.51" textLength="50.7" lengthAdjust="spacingAndGlyphs">member meeting meeting</text><text x="175" y="94.75" font-family="Liberation Sans" font-size="5.06" fill="#aaa" opacity="0.51" textLength="98.8" lengthAdjust="spacingAndGlyphs">feedback check status meeting progress</text><text x="97" y="99.75" font-family="Liberation Sans" font-size="5.06" fill="#aaa" opacity="0.51" textLength="49.7" lengthAdjust="spacingAndGlyphs">work employee time</text><text x="175" y="99.75" font-family="Liberation Sans" font-size="5.06" fill="#aaa" opacity="0.51" textLength="82.4" lengthAdjust="spacingAndGlyphs">work team performance from goals</text><text x="97" y="104.75" font-family="Liberation Sans" font-size="5.06" fill="#aaa" opacity="0.51" textLength="54.9" lengthAdjust="spacingAndGlyphs">review from data will</text><text x="175" y="104.75" font-family="Liberation Sans" font-size="5.06" fill="#aaa" opacity="0.51" textLength="82.4" lengthAdjust="spacingAndGlyphs">have employee progress that for</text><rect x="59" y="109" width="220" height="0.5" rx="0" fill="#3a3a3a" opacity="1"/><text x="59" y="117.00" font-family="Liberation Sans" font-size="5.52" fill="#ddd" opacity="0.58" textLength="23.2" lengthAdjust="spacingAndGlyphs">employee</text><text x="97" y="116.75" font-family="Liberation Sans" font-size="5.06" fill="#aaa" opacity="0.51" textLength="50.8" lengthAdjust="spacingAndGlyphs">employee progress work</text><text x="175" y="116.75" font-family="Liberation Sans" font-size="5.06" fill="#aaa" opacity="0.51" textLength="84.4" lengthAdjust="spacingAndGlyphs">progress monitoring project meeting</text><rect x="59" y="121" width="220" height="0.5" rx="0" fill="#3a3a3a" opacity="1"/><text x="59" y="129.50" font-family="Liberation Sans" font-size="5.52" fill="#ddd" opacity="0.58" textLength="20.8" lengthAdjust="spacingAndGlyphs">from your</text><text x="97" y="129.25" font-family="Liberation Sans" font-size="5.06" fill="#aaa" opacity="0.51" textLength="50.1" lengthAdjust="spacingAndGlyphs">that time member pr</text><text x="175" y="129.25" font-family="Liberation Sans" font-size="5.06" fill="#aaa" opacity="0.51" textLength="86.8" lengthAdjust="spacingAndGlyphs">review update team performance this</text><text x="97" y="134.25" font-family="Liberation Sans" font-size="5.06" fill="#aaa" opacity="0.51" textLength="53.4" lengthAdjust="spacingAndGlyphs">team status work work</text><text x="175" y="134.25" font-family="Liberation Sans" font-size="5.06" fill="#aaa" opacity="0.51" textLength="94.1" lengthAdjust="spacingAndGlyphs">project team member with data member</text><text x="97" y="139.25" font-family="Liberation Sans" font-size="5.06" fill="#aaa" opacity="0.51" textLength="67.1" lengthAdjust="spacingAndGlyphs">monitoring check will goals</text><text x="175" y="139.25" font-family="Liberation Sans" font-size="5.06" fill="#aaa" opacity="0.51" textLength="99.4" lengthAdjust="spacingAndGlyphs">monitoring performance feedback feedback</text><rect x="59" y="143.5" width="220" height="0.5" rx="0" fill="#3a3a3a" opacity="1"/><text x="59" y="151.50" font-family="Liberation Sans" font-size="5.52" fill="#ddd" opacity="0.58" textLength="14.6" lengthAdjust="spacingAndGlyphs">have</text><text x="97" y="151.25" font-family="Liberation Sans" font-size="5.06" fill="#aaa" opacity="0.51" textLength="49.2" lengthAdjust="spacingAndGlyphs">have employee your</text><text x="175" y="151.25" font-family="Liberation Sans" font-size="5.06" fill="#aaa" opacity="0.51" textLength="88.4" lengthAdjust="spacingAndGlyphs">check from your progress feedback</text><text x="97" y="156.25" font-family="Liberation Sans" font-size="5.06" fill="#aaa" opacity="0.51" textLength="54.3" lengthAdjust="spacingAndGlyphs">status check member</text><text x="175" y="156.25" font-family="Liberation Sans" font-size="5.06" fill="#aaa" opacity="0.51" textLength="91.4" lengthAdjust="spacingAndGlyphs">that team performance feedback and</text><text x="97" y="161.25" font-family="Liberation Sans" font-size="5.06" fill="#aaa" opacity="0.51" textLength="63.4" lengthAdjust="spacingAndGlyphs">tasks time meeting perfor</text><text x="175" y="161.25" font-family="Liberation Sans" font-size="5.06" fill="#aaa" opacity="0.51" textLength="85.4" lengthAdjust="spacingAndGlyphs">the for performance will feedback</text><rect x="59" y="165.5" width="220" height="0.5" rx="0" fill="#3a3a3a" opacity="1"/><text x="59" y="173.50" font-family="Liberation Sans" font-size="5.52" fill="#ddd" opacity="0.58" textLength="15.2" lengthAdjust="spacingAndGlyphs">about</text><text x="97" y="173.25" font-family="Liberation Sans" font-size="5.06" fill="#aaa" opacity="0.51" textLength="50.1" lengthAdjust="spacingAndGlyphs">feedback about moni</text><text x="175" y="173.25" font-family="Liberation Sans" font-size="5.06" fill="#aaa" opacity="0.51" textLength="89.1" lengthAdjust="spacingAndGlyphs">team status time check check feedback</text><text x="97" y="178.25" font-family="Liberation Sans" font-size="5.06" fill="#aaa" opacity="0.51" textLength="59.3" lengthAdjust="spacingAndGlyphs">and member that goals</text><text x="175" y="178.25" font-family="Liberation Sans" font-size="5.06" fill="#aaa" opacity="0.51" textLength="98.8" lengthAdjust="spacingAndGlyphs">tasks feedback and tasks review check</text><text x="97" y="183.25" font-family="Liberation Sans" font-size="5.06" fill="#aaa" opacity="0.51" textLength="52.2" lengthAdjust="spacingAndGlyphs">data member have rev</text><text x="175" y="183.25" font-family="Liberation Sans" font-size="5.06" fill="#aaa" opacity="0.51" textLength="85.8" lengthAdjust="spacingAndGlyphs">member from tasks feedback update</text><text x="97" y="188.25" font-family="Liberation Sans" font-size="5.06" fill="#aaa" opacity="0.51" textLength="63.5" lengthAdjust="spacingAndGlyphs">feedback and the the this</text><text x="175" y="188.25" font-family="Liberation Sans" font-size="5.06" fill="#aaa" opacity="0.51" textLength="90.1" lengthAdjust="spacingAndGlyphs">review member report goals check work</text><rect x="59" y="192.5" width="220" height="0.5" rx="0" fill="#3a3a3a" opacity="1"/><rect x="285" y="46.5" width="139" height="124" rx="3" fill="#25262b" opacity="1"/><text x="290" y="55.00" font-family="Liberation Sans" font-size="5.52" fill="#dcdcdc" opacity="0.62" textLength="95.0" lengthAdjust="spacingAndGlyphs">monitoring from your for time from</text><text x="290" y="60.00" font-family="Liberation Sans" font-size="5.52" fill="#dcdcdc" opacity="0.62" textLength="85.0" lengthAdjust="spacingAndGlyphs">report status your meeting pro</text><text x="290" y="65.50" font-family="Liberation Sans" font-size="4.6" fill="#999" opacity="0.47" textLength="95.0" lengthAdjust="spacingAndGlyphs">member data that review goals team review</text><text x="290" y="70.50" font-family="Liberation Sans" font-size="4.6" fill="#999" opacity="0.47" textLength="90.0" lengthAdjust="spacingAndGlyphs">your meeting that this for employee pro</text><circle cx="292" cy="76" r="2" fill="#ccc" opacity="0.6"/><text x="297" y="78.00" font-family="Liberation Sans" font-size="4.6" fill="#888" opacity="0.39" textLength="20.0" lengthAdjust="spacingAndGlyphs">update</text><text x="290" y="93.00" font-family="Liberation Sans" font-size="5.52" fill="#dcdcdc" opacity="0.62" textLength="95.0" lengthAdjust="spacingAndGlyphs">and your employee the performance</text><text x="290" y="98.00" font-family="Liberation Sans" font-size="5.52" fill="#dcdcdc" opacity="0.62" textLength="85.0" lengthAdjust="spacingAndGlyphs">for this meeting feedback time</text><text x="290" y="103.50" font-family="Liberation Sans" font-size="4.6" fill="#999" opacity="0.47" textLength="95.0" lengthAdjust="spacingAndGlyphs">tasks and performance from your project</text><text x="290" y="108.50" font-family="Liberation Sans" font-size="4.6" fill="#999" opacity="0.47" textLength="90.0" lengthAdjust="spacingAndGlyphs">about member from data with goals that</text><circle cx="292" cy="114" r="2" fill="#ccc" opacity="0.6"/><text x="297" y="116.00" font-family="Liberation Sans" font-size="4.6" fill="#888" opacity="0.39" textLength="20.0" lengthAdjust="spacingAndGlyphs">data and</text><text x="290" y="130.00" font-family="Liberation Sans" font-size="5.52" fill="#dcdcdc" opacity="0.62" textLength="95.0" lengthAdjust="spacingAndGlyphs">work tasks tasks feedback work the</text><text x="290" y="135.00" font-family="Liberation Sans" font-size="5.52" fill="#dcdcdc" opacity="0.62" textLength="85.0" lengthAdjust="spacingAndGlyphs">feedback update progress team</text><text x="290" y="140.50" font-family="Liberation Sans" font-size="4.6" fill="#999" opacity="0.47" textLength="95.0" lengthAdjust="spacingAndGlyphs">status team goals and progress meeting data</text><text x="290" y="145.50" font-family="Liberation Sans" font-size="4.6" fill="#999" opacity="0.47" textLength="90.0" lengthAdjust="spacingAndGlyphs">review update tasks the team project pe</text><circle cx="292" cy="151" r="2" fill="#ccc" opacity="0.6"/><text x="297" y="153.00" font-family="Liberation Sans" font-size="4.6" fill="#888" opacity="0.39" textLength="20.0" lengthAdjust="spacingAndGlyphs">report</text><rect x="393" y="49.5" width="27.5" height="20.5" rx="1" fill="#e8eef4" opacity="1"/><rect x="395" y="55" width="24" height="3" rx="0" fill="#6ab0d0" opacity="0.5"/><rect x="393" y="88" width="27.5" height="20.5" rx="1" fill="#6a6ae0" opacity="0.9"/><rect x="397" y="93" width="16" height="10" rx="1" fill="#a0a0f0" opacity="0.6"/><rect x="289" y="158" width="130" height="8.5" rx="2" fill="#32343c" opacity="1"/><text x="345" y="163.50" font-family="Liberation Sans" font-size="4.6" fill="#bbb" opacity="0.47" textLength="20.0" lengthAdjust="spacingAndGlyphs">feedback</text><text x="59" y="202.25" font-family="Liberation Sans" font-size="5.98" fill="#ccc" opacity="0.58" textLength="210.0" lengthAdjust="spacingAndGlyphs">member for review goals member have the performance feedback your perf</text><rect x="106" y="197.5" width="60" height="5" rx="0.5" fill="#6a3040" opacity="0.5"/><text x="59" y="208.25" font-family="Liberation Sans" font-size="5.98" fill="#ccc" opacity="0.58" textLength="80.0" lengthAdjust="spacingAndGlyphs">employee project daily and</text><rect x="59" y="211.5" width="60" height="9" rx="0" fill="#5a2a22" opacity="1"/><rect x="70" y="213" width="30" height="5" rx="1" fill="#a04030" opacity="0.5"/><rect x="119" y="211.5" width="40" height="9" rx="0" fill="#6a4a30" opacity="0.7"/><rect x="160" y="211.5" width="110" height="9" rx="0" fill="#1a1610" opacity="1"/><rect x="160" y="218" width="110" height="2" rx="0" fill="#605020" opacity="0.7"/></g></svg></div>
<div class="a" style="left:533.4px;top:852.8px;width:139px;height:9.2px;border-radius:5px;background:#e3e6eb"></div>
<div class="a" style="left:533.4px;top:852.8px;width:84.8px;height:9.2px;border-radius:5px;background:#22bdaa"></div>
<div class="a" style="left:1067.5px;top:852.8px;width:139px;height:9.2px;border-radius:5px;background:#e3e6eb"></div>
<div class="a" style="left:1067.5px;top:852.8px;width:115.4px;height:9.2px;border-radius:5px;background:#22bdaa"></div>
<div class="a" style="left:1600.9px;top:852.8px;width:139px;height:9.2px;border-radius:5px;background:#e3e6eb"></div>
<div class="a" style="left:1600.9px;top:852.8px;width:45.9px;height:9.2px;border-radius:5px;background:#f2c440"></div>
<div class="a" style="left:0;top:0;width:2000px;height:2px;background:#2b2b2e"></div>
<div class="a" style="left:0;top:2px;width:2000px;height:1.2px;background:#fff"></div>
<div class="t" id="analyze" style="left:28.10px;top:126.70px;font-size:17px;font-weight:400;color:#707070;letter-spacing:0.093px;--ls:0.093px;transform-origin:0 0;transform:scaleX(1.0700);-webkit-text-stroke:0.19px #707070;">Analyze</div>
<div class="t" id="dashboard" style="left:74.34px;top:177.30px;font-size:20px;font-weight:400;color:#3b3b3b;letter-spacing:0.000px;--ls:0.000px;transform-origin:0 0;transform:scaleX(1.0635);-webkit-text-stroke:0.23px #3b3b3b;">Dashboard</div>
<div class="t" id="remotetrack" style="left:72.23px;top:234.70px;font-size:19.5px;font-weight:400;color:#3b3b3b;letter-spacing:0.023px;--ls:0.023px;transform-origin:0 0;transform:scaleX(1.0700);-webkit-text-stroke:0.22px #3b3b3b;">RemoteTrack</div>
<div class="t" id="ssnav" style="left:77.43px;top:292.60px;font-size:20px;font-weight:400;color:#ffffff;letter-spacing:0.037px;--ls:0.037px;transform-origin:0 0;transform:scaleX(1.0700);-webkit-text-stroke:0.51px #ffffff;">Screenshots</div>
<div class="t" id="screenrec" style="left:77.23px;top:335.30px;font-size:19px;font-weight:400;color:#3b3b3b;letter-spacing:0.176px;--ls:0.176px;transform-origin:0 0;transform:scaleX(1.0700);-webkit-text-stroke:0.21px #3b3b3b;">Screen Records</div>
<div class="t" id="apps" style="left:78.30px;top:376.70px;font-size:19px;font-weight:400;color:#3b3b3b;letter-spacing:0.526px;--ls:0.526px;transform-origin:0 0;transform:scaleX(1.0700);-webkit-text-stroke:0.21px #3b3b3b;">Apps</div>
<div class="t" id="urls" style="left:77.97px;top:418.20px;font-size:19px;font-weight:400;color:#3b3b3b;letter-spacing:0.000px;--ls:0.000px;transform-origin:0 0;transform:scaleX(1.0283);-webkit-text-stroke:0.21px #3b3b3b;">URLs</div>
<div class="t" id="timesheets" style="left:72.60px;top:472.40px;font-size:19.5px;font-weight:400;color:#3b3b3b;letter-spacing:0.197px;--ls:0.197px;transform-origin:0 0;transform:scaleX(1.0700);-webkit-text-stroke:0.22px #3b3b3b;">Timesheets</div>
<div class="t" id="manage" style="left:27.53px;top:553.20px;font-size:17px;font-weight:400;color:#707070;letter-spacing:0.636px;--ls:0.636px;transform-origin:0 0;transform:scaleX(1.0700);-webkit-text-stroke:0.19px #707070;">Manage</div>
<div class="t" id="tasks" style="left:74.00px;top:604.60px;font-size:19.5px;font-weight:400;color:#3b3b3b;letter-spacing:0.000px;--ls:0.000px;transform-origin:0 0;transform:scaleX(1.0367);-webkit-text-stroke:0.22px #3b3b3b;">Tasks</div>
<div class="t" id="attendance" style="left:72.60px;top:661.60px;font-size:19.5px;font-weight:400;color:#3b3b3b;letter-spacing:0.606px;--ls:0.606px;transform-origin:0 0;transform:scaleX(1.0700);-webkit-text-stroke:0.22px #3b3b3b;">Attendance</div>
<div class="t" id="projects" style="left:73.73px;top:739.70px;font-size:19.5px;font-weight:400;color:#3b3b3b;letter-spacing:0.276px;--ls:0.276px;transform-origin:0 0;transform:scaleX(1.0700);-webkit-text-stroke:0.22px #3b3b3b;">Projects</div>
<div class="t" id="admin" style="left:28.00px;top:819.90px;font-size:17px;font-weight:400;color:#707070;letter-spacing:1.084px;--ls:1.084px;transform-origin:0 0;transform:scaleX(1.0700);-webkit-text-stroke:0.19px #707070;">Admin</div>
<div class="t" id="teams" style="left:74.00px;top:871.50px;font-size:19.5px;font-weight:400;color:#3b3b3b;letter-spacing:0.000px;--ls:0.000px;transform-origin:0 0;transform:scaleX(1.0632);-webkit-text-stroke:0.22px #3b3b3b;">Teams</div>
<div class="t" id="members" style="left:73.73px;top:928.30px;font-size:19.5px;font-weight:400;color:#3b3b3b;letter-spacing:0.530px;--ls:0.530px;transform-origin:0 0;transform:scaleX(1.0700);-webkit-text-stroke:0.22px #3b3b3b;">Members</div>
<div class="t" id="support" style="left:127.53px;top:1018.20px;font-size:17.5px;font-weight:400;color:#3d4f6e;letter-spacing:0.379px;--ls:0.379px;transform-origin:0 0;transform:scaleX(1.0700);-webkit-text-stroke:0.20px #3d4f6e;">Support</div>
<div class="t" id="title" style="left:339.73px;top:38.70px;font-size:29px;font-weight:400;color:#1b2538;letter-spacing:0.374px;--ls:0.374px;transform-origin:0 0;transform:scaleX(1.0700);-webkit-text-stroke:0.74px #1b2538;">Screenshots</div>
<div class="t" id="lbl_proj" style="left:340.13px;top:101.50px;font-size:17.5px;font-weight:400;color:#6b7b92;letter-spacing:0.002px;--ls:0.002px;transform-origin:0 0;transform:scaleX(1.0700);-webkit-text-stroke:0.45px #6b7b92;">Projects &amp; Tasks</div>
<div class="t" id="lbl_member" style="left:610.93px;top:102.00px;font-size:17.5px;font-weight:400;color:#6b7b92;letter-spacing:0.858px;--ls:0.858px;transform-origin:0 0;transform:scaleX(1.0700);-webkit-text-stroke:0.45px #6b7b92;">Member</div>
<div class="t" id="lbl_date" style="left:711.43px;top:101.80px;font-size:17.5px;font-weight:400;color:#6b7b92;letter-spacing:0.125px;--ls:0.125px;transform-origin:0 0;transform:scaleX(1.0700);-webkit-text-stroke:0.45px #6b7b92;">Date (Today selected)</div>
<div class="t" id="lbl_tz" style="left:1627.00px;top:101.70px;font-size:17.5px;font-weight:400;color:#6b7b92;letter-spacing:0.278px;--ls:0.278px;transform-origin:0 0;transform:scaleX(1.0700);-webkit-text-stroke:0.45px #6b7b92;">Timezone</div>
<div class="t" id="all" style="left:355.53px;top:148.50px;font-size:20px;font-weight:400;color:#151515;letter-spacing:0.005px;--ls:0.005px;transform-origin:0 0;transform:scaleX(1.0700);-webkit-text-stroke:0.23px #151515;">(All)</div>
<div class="t" id="date_in" style="left:734.50px;top:150.30px;font-size:19.5px;font-weight:400;color:#1b1f2a;letter-spacing:-0.167px;--ls:-0.167px;transform-origin:0 0;transform:scaleX(1.0000);-webkit-text-stroke:0.22px #1b1f2a;">25/<span class="n1">I</span><span class="n1">I</span>/2025</div>
<div class="t" id="today" style="left:1051.00px;top:149.20px;font-size:19.5px;font-weight:400;color:#1b2230;letter-spacing:0.000px;--ls:0.000px;transform-origin:0 0;transform:scaleX(1.0192);-webkit-text-stroke:0.22px #1b2230;">Today</div>
<div class="t" id="org" style="left:1639.13px;top:148.70px;font-size:19.5px;font-weight:400;color:#1b2230;letter-spacing:0.099px;--ls:0.099px;transform-origin:0 0;transform:scaleX(1.0700);-webkit-text-stroke:0.22px #1b2230;">Organization</div>
<div class="t" id="sb_member" style="left:624.96px;top:149.60px;font-size:19.5px;font-weight:400;color:#ffffff;letter-spacing:0.000px;--ls:0.000px;transform-origin:0 0;transform:scaleX(1.0400);-webkit-text-stroke:0.50px #ffffff;">SB</div>
<div class="t" id="sb_sum" style="left:415.93px;top:292.00px;font-size:19px;font-weight:400;color:#ffffff;letter-spacing:0.299px;--ls:0.299px;transform-origin:0 0;transform:scaleX(1.0700);-webkit-text-stroke:0.49px #ffffff;">SB</div>
<div class="t" id="name" style="left:478.33px;top:292.00px;font-size:19.5px;font-weight:400;color:#34466a;letter-spacing:0.488px;--ls:0.488px;transform-origin:0 0;transform:scaleX(1.0700);-webkit-text-stroke:0.22px #34466a;">Sumaiya begum</div>
<div class="t" id="d_val" style="left:720.97px;top:274.20px;font-size:20px;font-weight:400;color:#2c3b57;letter-spacing:0.000px;--ls:0.000px;transform-origin:0 0;transform:scaleX(1.0269);-webkit-text-stroke:0.51px #2c3b57;">25/<span class="n1">I</span><span class="n1">I</span>/2025</div>
<div class="t" id="d_lbl" style="left:722.00px;top:311.20px;font-size:18px;font-weight:400;color:#6f7e95;letter-spacing:0.000px;--ls:0.000px;transform-origin:0 0;transform:scaleX(1.0147);-webkit-text-stroke:0.20px #6f7e95;">Tuesday</div>
<div class="t" id="clk_val" style="left:858.00px;top:274.20px;font-size:20px;font-weight:400;color:#2c3b57;letter-spacing:-0.056px;--ls:-0.056px;transform-origin:0 0;transform:scaleX(1.0000);-webkit-text-stroke:0.51px #2c3b57;"><span class="n1">I</span><span class="n1">I</span>:3<span class="n1">I</span> am -</div>
<div class="t" id="clk_lbl" style="left:858.93px;top:311.20px;font-size:18px;font-weight:400;color:#6f7e95;letter-spacing:0.000px;--ls:0.000px;transform-origin:0 0;transform:scaleX(1.0663);-webkit-text-stroke:0.20px #6f7e95;">Clock In/Out</div>
<div class="t" id="tot_val" style="left:1020.75px;top:274.20px;font-size:20px;font-weight:400;color:#2c3b57;letter-spacing:0.502px;--ls:0.502px;transform-origin:0 0;transform:scaleX(1.0700);-webkit-text-stroke:0.51px #2c3b57;">4h 6m</div>
<div class="t" id="tot_lbl" style="left:1020.75px;top:311.20px;font-size:18px;font-weight:400;color:#6f7e95;letter-spacing:0.000px;--ls:0.000px;transform-origin:0 0;transform:scaleX(1.0518);-webkit-text-stroke:0.20px #6f7e95;">Total Time</div>
<div class="t" id="act_pct" style="left:1422.40px;top:274.40px;font-size:20px;font-weight:400;color:#2c3b57;letter-spacing:-1.200px;--ls:-1.200px;transform-origin:0 0;transform:scaleX(1.0000);-webkit-text-stroke:0.51px #2c3b57;">4<span class="n1">I</span>%</div>
<div class="t" id="act_lbl" style="left:1269.00px;top:311.00px;font-size:18px;font-weight:400;color:#6f7e95;letter-spacing:0.215px;--ls:0.215px;transform-origin:0 0;transform:scaleX(1.0700);-webkit-text-stroke:0.20px #6f7e95;">Activity</div>
<div class="t" id="at_val" style="left:1497.46px;top:274.00px;font-size:20px;font-weight:400;color:#2c3b57;letter-spacing:0.398px;--ls:0.398px;transform-origin:0 0;transform:scaleX(1.0700);-webkit-text-stroke:0.51px #2c3b57;"><span class="n1">I</span>h 42m</div>
<div class="t" id="at_lbl" style="left:1499.60px;top:311.00px;font-size:18px;font-weight:400;color:#6f7e95;letter-spacing:0.000px;--ls:0.000px;transform-origin:0 0;transform:scaleX(1.0581);-webkit-text-stroke:0.20px #6f7e95;">Active Time</div>
<div class="t" id="nt_val" style="left:1639.54px;top:274.00px;font-size:20px;font-weight:400;color:#2c3b57;letter-spacing:0.000px;--ls:0.000px;transform-origin:0 0;transform:scaleX(1.0615);-webkit-text-stroke:0.51px #2c3b57;">2h 23m</div>
<div class="t" id="nt_lbl" style="left:1639.53px;top:311.00px;font-size:18px;font-weight:400;color:#6f7e95;letter-spacing:0.028px;--ls:0.028px;transform-origin:0 0;transform:scaleX(1.0700);-webkit-text-stroke:0.20px #6f7e95;">Neutral Time</div>
<div class="t" id="it_val" style="left:1841.40px;top:274.00px;font-size:20px;font-weight:400;color:#2c3b57;letter-spacing:0.000px;--ls:0.000px;transform-origin:0 0;transform:scaleX(1.0000);-webkit-text-stroke:0.51px #2c3b57;">-</div>
<div class="t" id="it_lbl" style="left:1804.94px;top:311.00px;font-size:18px;font-weight:400;color:#6f7e95;letter-spacing:0.000px;--ls:0.000px;transform-origin:0 0;transform:scaleX(1.0639);-webkit-text-stroke:0.20px #6f7e95;">Idle Time</div>
<div class="t" id="h1" style="left:378.61px;top:415.25px;font-size:20px;font-weight:400;color:#2e3f5e;letter-spacing:0.000px;--ls:0.000px;transform-origin:0 0;transform:scaleX(1.0678);-webkit-text-stroke:0.51px #2e3f5e;"><span class="n1">I</span><span class="n1">I</span>:00 AM - <span class="n1">I</span>2:00 PM</div>
<div class="t" id="h2" style="left:378.76px;top:983.60px;font-size:20px;font-weight:400;color:#2e3f5e;letter-spacing:0.000px;--ls:0.000px;transform-origin:0 0;transform:scaleX(1.0680);-webkit-text-stroke:0.51px #2e3f5e;"><span class="n1">I</span>2:00 PM - <span class="n1">I</span>:00 PM</div>
<div class="t" id="ict00" style="left:405.53px;top:491.20px;font-size:19.5px;font-weight:400;color:#1b2538;letter-spacing:0.259px;--ls:0.259px;transform-origin:0 0;transform:scaleX(1.0700);-webkit-text-stroke:0.50px #1b2538;">Independent Contractor</div>
<div class="t" id="nt00" style="left:405.53px;top:521.10px;font-size:17.5px;font-weight:400;color:#3c4d6b;letter-spacing:0.006px;--ls:0.006px;transform-origin:0 0;transform:scaleX(1.0700);-webkit-text-stroke:0.20px #3c4d6b;">No task</div>
<div class="t" id="ict01" style="left:405.53px;top:1059.60px;font-size:19.5px;font-weight:400;color:#1b2538;letter-spacing:0.259px;--ls:0.259px;transform-origin:0 0;transform:scaleX(1.0700);-webkit-text-stroke:0.50px #1b2538;">Independent Contractor</div>
<div class="t" id="nt01" style="left:405.53px;top:1089.50px;font-size:17.5px;font-weight:400;color:#3c4d6b;letter-spacing:0.006px;--ls:0.006px;transform-origin:0 0;transform:scaleX(1.0700);-webkit-text-stroke:0.20px #3c4d6b;">No task</div>
<div class="t" id="rng0" style="left:404.00px;top:796.00px;font-size:19.5px;font-weight:400;color:#1b2230;letter-spacing:-0.011px;--ls:-0.011px;transform-origin:0 0;transform:scaleX(1.0000);-webkit-text-stroke:0.50px #1b2230;"><span class="n1">I</span><span class="n1">I</span>:3<span class="n1">I</span> am - <span class="n1">I</span><span class="n1">I</span>:40 am</div>
<div class="t" id="st0a" style="left:798.60px;top:797.50px;font-size:16px;font-weight:400;color:#1b2538;letter-spacing:0.150px;--ls:0.150px;transform-origin:0 0;transform:scaleX(1.0700);-webkit-text-stroke:0.18px #1b2538;">*<span class="n1">I</span></div>
<div class="t" id="st0b" style="left:852.50px;top:797.50px;font-size:16px;font-weight:400;color:#1b2538;letter-spacing:0.150px;--ls:0.150px;transform-origin:0 0;transform:scaleX(1.0700);-webkit-text-stroke:0.18px #1b2538;">*<span class="n1">I</span></div>
<div class="t" id="pct0" style="left:700.10px;top:848.00px;font-size:19px;font-weight:400;color:#3c4d6b;letter-spacing:-1.000px;--ls:-1.000px;transform-origin:0 0;transform:scaleX(1.0000);-webkit-text-stroke:0.21px #3c4d6b;">6<span class="n1">I</span>%</div>
<div class="t" id="act0" style="left:534.20px;top:888.80px;font-size:19.5px;font-weight:400;color:#34456a;letter-spacing:-0.000px;--ls:-0.000px;transform-origin:0 0;transform:scaleX(1.0674);-webkit-text-stroke:0.50px #34456a;">Active Time <span style="color:#22bdaa;-webkit-text-stroke:0.15px #22bdaa">5 Minutes</span></div>
<div class="t" id="ict10" style="left:939.63px;top:491.20px;font-size:19.5px;font-weight:400;color:#1b2538;letter-spacing:0.259px;--ls:0.259px;transform-origin:0 0;transform:scaleX(1.0700);-webkit-text-stroke:0.50px #1b2538;">Independent Contractor</div>
<div class="t" id="nt10" style="left:939.63px;top:521.10px;font-size:17.5px;font-weight:400;color:#3c4d6b;letter-spacing:0.006px;--ls:0.006px;transform-origin:0 0;transform:scaleX(1.0700);-webkit-text-stroke:0.20px #3c4d6b;">No task</div>
<div class="t" id="ict11" style="left:939.63px;top:1059.60px;font-size:19.5px;font-weight:400;color:#1b2538;letter-spacing:0.259px;--ls:0.259px;transform-origin:0 0;transform:scaleX(1.0700);-webkit-text-stroke:0.50px #1b2538;">Independent Contractor</div>
<div class="t" id="nt11" style="left:939.63px;top:1089.50px;font-size:17.5px;font-weight:400;color:#3c4d6b;letter-spacing:0.006px;--ls:0.006px;transform-origin:0 0;transform:scaleX(1.0700);-webkit-text-stroke:0.20px #3c4d6b;">No task</div>
<div class="t" id="rng1" style="left:938.10px;top:796.00px;font-size:19.5px;font-weight:400;color:#1b2230;letter-spacing:-0.011px;--ls:-0.011px;transform-origin:0 0;transform:scaleX(1.0000);-webkit-text-stroke:0.50px #1b2230;"><span class="n1">I</span><span class="n1">I</span>:40 am - <span class="n1">I</span><span class="n1">I</span>:50 am</div>
<div class="t" id="st1a" style="left:1332.70px;top:797.50px;font-size:16px;font-weight:400;color:#1b2538;letter-spacing:0.150px;--ls:0.150px;transform-origin:0 0;transform:scaleX(1.0700);-webkit-text-stroke:0.18px #1b2538;">*<span class="n1">I</span></div>
<div class="t" id="st1b" style="left:1386.60px;top:797.50px;font-size:16px;font-weight:400;color:#1b2538;letter-spacing:0.150px;--ls:0.150px;transform-origin:0 0;transform:scaleX(1.0700);-webkit-text-stroke:0.18px #1b2538;">*<span class="n1">I</span></div>
<div class="t" id="pct1" style="left:1234.20px;top:848.00px;font-size:19px;font-weight:400;color:#3c4d6b;letter-spacing:-1.000px;--ls:-1.000px;transform-origin:0 0;transform:scaleX(1.0000);-webkit-text-stroke:0.21px #3c4d6b;">83%</div>
<div class="t" id="act1" style="left:1068.30px;top:888.80px;font-size:19.5px;font-weight:400;color:#34456a;letter-spacing:-0.000px;--ls:-0.000px;transform-origin:0 0;transform:scaleX(1.0674);-webkit-text-stroke:0.50px #34456a;">Active Time <span style="color:#22bdaa;-webkit-text-stroke:0.15px #22bdaa">9 Minutes</span></div>
<div class="t" id="ict20" style="left:1473.03px;top:491.20px;font-size:19.5px;font-weight:400;color:#1b2538;letter-spacing:0.259px;--ls:0.259px;transform-origin:0 0;transform:scaleX(1.0700);-webkit-text-stroke:0.50px #1b2538;">Independent Contractor</div>
<div class="t" id="nt20" style="left:1473.03px;top:521.10px;font-size:17.5px;font-weight:400;color:#3c4d6b;letter-spacing:0.006px;--ls:0.006px;transform-origin:0 0;transform:scaleX(1.0700);-webkit-text-stroke:0.20px #3c4d6b;">No task</div>
<div class="t" id="ict21" style="left:1473.03px;top:1059.60px;font-size:19.5px;font-weight:400;color:#1b2538;letter-spacing:0.259px;--ls:0.259px;transform-origin:0 0;transform:scaleX(1.0700);-webkit-text-stroke:0.50px #1b2538;">Independent Contractor</div>
<div class="t" id="nt21" style="left:1473.03px;top:1089.50px;font-size:17.5px;font-weight:400;color:#3c4d6b;letter-spacing:0.006px;--ls:0.006px;transform-origin:0 0;transform:scaleX(1.0700);-webkit-text-stroke:0.20px #3c4d6b;">No task</div>
<div class="t" id="rng2" style="left:1471.50px;top:796.00px;font-size:19.5px;font-weight:400;color:#1b2230;letter-spacing:-0.011px;--ls:-0.011px;transform-origin:0 0;transform:scaleX(1.0000);-webkit-text-stroke:0.50px #1b2230;"><span class="n1">I</span><span class="n1">I</span>:50 am - <span class="n1">I</span>2:00 pm</div>
<div class="t" id="st2a" style="left:1866.10px;top:797.50px;font-size:16px;font-weight:400;color:#1b2538;letter-spacing:0.150px;--ls:0.150px;transform-origin:0 0;transform:scaleX(1.0700);-webkit-text-stroke:0.18px #1b2538;">*<span class="n1">I</span></div>
<div class="t" id="st2b" style="left:1920.00px;top:797.50px;font-size:16px;font-weight:400;color:#1b2538;letter-spacing:0.150px;--ls:0.150px;transform-origin:0 0;transform:scaleX(1.0700);-webkit-text-stroke:0.18px #1b2538;">*<span class="n1">I</span></div>
<div class="t" id="pct2" style="left:1767.60px;top:848.00px;font-size:19px;font-weight:400;color:#3c4d6b;letter-spacing:-1.000px;--ls:-1.000px;transform-origin:0 0;transform:scaleX(1.0000);-webkit-text-stroke:0.21px #3c4d6b;">33%</div>
<div class="t" id="act2" style="left:1601.70px;top:888.80px;font-size:19.5px;font-weight:400;color:#34456a;letter-spacing:-0.000px;--ls:-0.000px;transform-origin:0 0;transform:scaleX(1.0674);-webkit-text-stroke:0.50px #34456a;">Active Time <span style="color:#22bdaa;-webkit-text-stroke:0.15px #22bdaa">4 Minutes</span></div>
<svg class="a" style="left:0;top:0" width="2000" height="1130" viewBox="0 0 2000 1130" fill="none" stroke-linecap="round" stroke-linejoin="round">
<defs>
<linearGradient id="lg1" x1="0.85" y1="0.05" x2="0.2" y2="0.95"><stop offset="0" stop-color="#3ad4a9"/><stop offset="1" stop-color="#0687b0"/></linearGradient>
<linearGradient id="lg2" gradientUnits="userSpaceOnUse" x1="83" y1="0" x2="229" y2="0"><stop offset="0" stop-color="#33c9a6"/><stop offset="1" stop-color="#0b8fae"/></linearGradient>
</defs>
<path fill="url(#lg1)" d="M34.5 41 C38 37.5 42 36 45.5 36 C51.5 36 55.8 39.5 58.5 45 L70.8 66.2 L63 66.2 C59 66.2 56 64 54 61 C52 64.3 49 66.2 44.5 66.2 C36 66.2 30.5 59 30.5 51 C30.5 47 32 43.6 34.5 41 Z"/>
<path stroke="#fff" stroke-width="0.9" d="M34.2 41 C40.5 40 46 42 48.5 46 C50.8 50 52.2 56.5 55 62.2"/>
<path stroke="#fff" stroke-width="0.9" d="M47.2 47.2 C42 48.8 38.5 56 40.5 66.3"/>
<circle cx="46" cy="51.2" r="2.6" fill="#fff"/>
<g stroke="url(#lg2)" stroke-width="4.4" stroke-linecap="butt">
<circle cx="92.4" cy="51.5" r="7.3"/>
<path d="M99.8 46 L104 60.8" stroke-width="4.6"/>
<path d="M112.2 42 V67.8"/><circle cx="120.7" cy="51.5" r="7.3"/>
<path d="M136.4 42 V67.8"/><circle cx="144.8" cy="51.5" r="7.3"/>
<path d="M160.9 34.2 V60.8"/>
<ellipse cx="177.5" cy="51.5" rx="8.1" ry="7.4"/>
<path d="M190.2 42 L198.8 59 M207.5 42 L197 63 C195.5 66 193 66.5 189.5 65.5"/>
<path d="M211.6 51.2 H227 C227 46 223.5 44.2 219.6 44.2 C215 44.2 211.8 47.5 211.8 51.5 C211.8 55.8 215 58.8 219.6 58.8 C222.5 58.8 224.5 57.8 226.2 55.8"/>
</g>
<g stroke="#404040" stroke-width="1.6"><rect x="33.9" y="176" width="23.3" height="23.2" rx="6.5"/><path d="M45.5 176 V199.2 M33.9 187.6 H57.2"/></g>
<g stroke="#404040" stroke-width="1.6" stroke-width="1.7"><path d="M40 232.6 H37 Q32.8 232.6 32.8 237 V246.3 Q32.8 250.4 37.2 250.4 H51.8 Q56 250.4 56 246.3 V244.6"/><path d="M32.8 245.8 H56"/><rect x="43.4" y="232.6" width="9.6" height="9.3" rx="3"/><rect x="53.6" y="234.3" width="2.6" height="5.8" rx="1.3"/><path d="M44.4 250.4 V256.3 M38.6 256.3 H50.3"/></g>
<g stroke="#fff" stroke-width="1.6"><rect x="44" y="294.3" width="17.8" height="17.8" rx="4.5"/></g>
<circle cx="50" cy="299.3" r="2.2" fill="#fff"/>
<path fill="#fff" d="M44.5 309 C46 307.5 48 306 49.7 306 C51 306 52 306.9 52.9 306.9 C55 306.9 58.5 302.8 61.4 302.8 V308 Q61.4 312 57.5 312 H48 Q44.5 312 44.5 309 Z"/>
<g stroke="#404040" stroke-width="1.6" stroke-width="1.4"><rect x="44.4" y="336.9" width="13.2" height="15.3" rx="3.6"/><circle cx="52.4" cy="342.5" r="1.6"/><path d="M57.6 341.6 L60.3 339.6 Q61.8 338.8 61.8 340.5 V348.2 Q61.8 350 60.3 349 L57.6 347.6"/></g>
<g stroke="#404040" stroke-width="1.6" stroke-width="1.4"><path d="M61.3 381.4 V380.5 Q61.3 377.6 58.4 377.6 H46.8 Q43.9 377.6 43.9 380.5 V388 Q43.9 390.8 46.8 390.8 H50.5 V395.4 H47.6"/><path d="M43.9 387.3 H50.5"/><rect x="53.4" y="384.1" width="9" height="11.3" rx="2.3"/><circle cx="57.7" cy="392.1" r="0.8" fill="#404040"/></g>
<g stroke="#404040" stroke-width="1.6" stroke-width="1.4"><circle cx="52.9" cy="428" r="9.1"/><path d="M49.3 419.5 Q47.8 428 49.3 436.5 M56.5 419.5 Q58 428 56.5 436.5 M44.3 424.1 H61.5 M44.3 431.8 H61.5"/></g>
<g stroke="#404040" stroke-width="1.6" stroke-width="1.5"><circle cx="44.4" cy="482.1" r="11.6"/><path d="M44.1 477.2 V482.2 Q44.1 483.7 45.5 484.6 L48.8 486.3"/></g>
<path stroke="#5a6a88" stroke-width="1.3" d="M252.5 241.5 L258.9 248.3 L265.1 241.5"/>
<path stroke="#5a6a88" stroke-width="1.3" d="M255 476.3 L261.9 482.2 L255 488.1"/>
<path stroke="#5a6a88" stroke-width="1.3" d="M255 665 L261.9 671.2 L255 677.4"/>
<g stroke="#404040" stroke-width="1.6" stroke-width="1.5"><rect x="34.3" y="602.4" width="23.2" height="23.4" rx="6.5"/><path d="M39.2 610.7 L40.3 612 L43 608.8 M39.2 618.6 L40.3 619.9 L43 616.7 M45.9 610.6 H52.7 M45.9 618.6 H52.7"/></g>
<g stroke="#404040" stroke-width="1.6" stroke-width="1.5"><path d="M45 683 H40.5 Q34.1 683 34.1 676.5 V667.3 Q34.1 661.3 40.3 661.3 H49.2 Q55.1 661.3 55.1 667.3 V674.8"/><path d="M39.7 659.3 V663.4 M49.1 659.3 V663.4 M34.1 667.8 H55.1"/><circle cx="51.2" cy="679.1" r="5"/><path d="M49 679.2 L50.6 680.6 L53.5 677.6"/></g>
<circle cx="40.2" cy="673.2" r="1" fill="#404040"/>
<circle cx="44.5" cy="673.2" r="1" fill="#404040"/>
<circle cx="40.2" cy="676.8" r="1" fill="#404040"/>
<g stroke="#404040" stroke-width="1.6" stroke-width="1.5"><rect x="34.2" y="737.3" width="23.3" height="23.3" rx="6.5"/><path d="M41.3 745.5 H50.7 M41.3 752.4 H50.7"/></g>
<g stroke="#404040" stroke-width="1.6" stroke-width="1.4"><circle cx="38.9" cy="872.4" r="3.3"/><circle cx="52.6" cy="872.4" r="3.3"/><circle cx="45.7" cy="881.1" r="3.3"/><ellipse cx="45.7" cy="889.5" rx="4.8" ry="3"/><path d="M40.3 878 Q34.4 878 34.4 881 Q34.4 884 40.3 884 M51.2 878 Q57.2 878 57.2 881 Q57.2 884 51.2 884"/></g>
<g stroke="#404040" stroke-width="1.6" stroke-width="1.4"><circle cx="42.2" cy="931.5" r="5.3"/><ellipse cx="42.5" cy="944.4" rx="8.2" ry="4.8"/><path d="M50.6 928.3 Q55.2 928.8 55.2 932.8 Q55.2 936.8 50.6 937.3 M52.8 940.3 Q57.5 941.5 57.5 944 Q57.5 946.8 52.9 947.6"/></g>
<g stroke="#3b4f72" stroke-width="1.4"><path d="M105.4 1031.6 Q101.8 1031 101.8 1027.6 V1021.3 Q101.8 1017.6 105.6 1017.6 H115.8 Q119.5 1017.6 119.5 1021.3 V1027.8 Q119.5 1031.6 115.8 1031.6 H111.6 L107.6 1034.4 Q106.6 1035 106.4 1033.8 Z"/><path d="M108.6 1023.2 Q108.9 1021.2 110.5 1021.2 Q112.4 1021.2 112.3 1023 Q112.2 1024.2 110.8 1025.4 L110.4 1025.9"/></g>
<circle cx="110.4" cy="1028.2" r="0.75" fill="#3b4f72"/>
<path stroke="#fff" stroke-width="1.6" d="M198.6 1099.4 L204.2 1093.6 L209.8 1099.4"/>
<path stroke="#5a6781" stroke-width="1.4" d="M554.5 155.4 L560.2 161.6 L565.9 155.4"/>
<path stroke="#5a6781" stroke-width="1.4" d="M1786.5 155.6 L1792.5 162 L1798.6 155.6"/>
<path stroke="#677791" stroke-width="3.2" d="M951.2 148.5 L940 158.8 L951.2 169.2"/>
<path stroke="#aeb7c5" stroke-width="3.2" d="M1001.6 148.5 L1012.6 158.8 L1001.6 169.2"/>
<g stroke="#22bdaa" stroke-width="1.7"><rect x="868.8" y="150" width="23.4" height="21.2" rx="3.2"/><path d="M874.4 147.5 V152 M886.6 147.5 V152 M868.8 154.9 H892.2 M875.3 162.3 H885.4"/></g>
<g stroke="#22bdaa" stroke-width="2.1"><path d="M1857.3 149 V166 M1852 154.3 L1857.3 148.6 L1862.6 154.3"/></g>
<g stroke="#45679a" stroke-width="2.1"><path d="M1867.6 152.4 V169 M1862.5 163.8 L1867.6 169.3 L1872.8 163.8"/></g>
<g stroke="#45679a" stroke-width="1.7"><path d="M1935 145.9 H1926 Q1919.9 145.9 1919.9 152 V165 Q1919.9 171 1926 171 H1936.3 Q1942.4 171 1942.4 165 V152.6"/><path d="M1935 145.9 Q1942.4 146.5 1942.4 152.6 Q1937.5 151.6 1935.8 149.6 Q1934.6 148 1935 145.9 Z"/><path d="M1925.5 155.7 H1937.3 M1925.5 161.3 H1931.6"/></g>
<g stroke="#2c3850" stroke-width="1.5" transform="translate(0,0)"><rect x="776.3" y="797.8" width="15" height="15.4" rx="2.6"/><path d="M776.5 808.6 L780.4 804.2 L785.4 809 L788.5 806.4 L791.2 808.4"/><rect x="828" y="797.8" width="18.4" height="12.5" rx="2.5"/><path d="M837.2 810.3 V813.2 M832.5 813.2 H841.8"/></g>
<g stroke="#2c3850" stroke-width="1.5" transform="translate(534.1,0)"><rect x="776.3" y="797.8" width="15" height="15.4" rx="2.6"/><path d="M776.5 808.6 L780.4 804.2 L785.4 809 L788.5 806.4 L791.2 808.4"/><rect x="828" y="797.8" width="18.4" height="12.5" rx="2.5"/><path d="M837.2 810.3 V813.2 M832.5 813.2 H841.8"/></g>
<g stroke="#2c3850" stroke-width="1.5" transform="translate(1067.5,0)"><rect x="776.3" y="797.8" width="15" height="15.4" rx="2.6"/><path d="M776.5 808.6 L780.4 804.2 L785.4 809 L788.5 806.4 L791.2 808.4"/><rect x="828" y="797.8" width="18.4" height="12.5" rx="2.5"/><path d="M837.2 810.3 V813.2 M832.5 813.2 H841.8"/></g>
</svg>
</body></html>
